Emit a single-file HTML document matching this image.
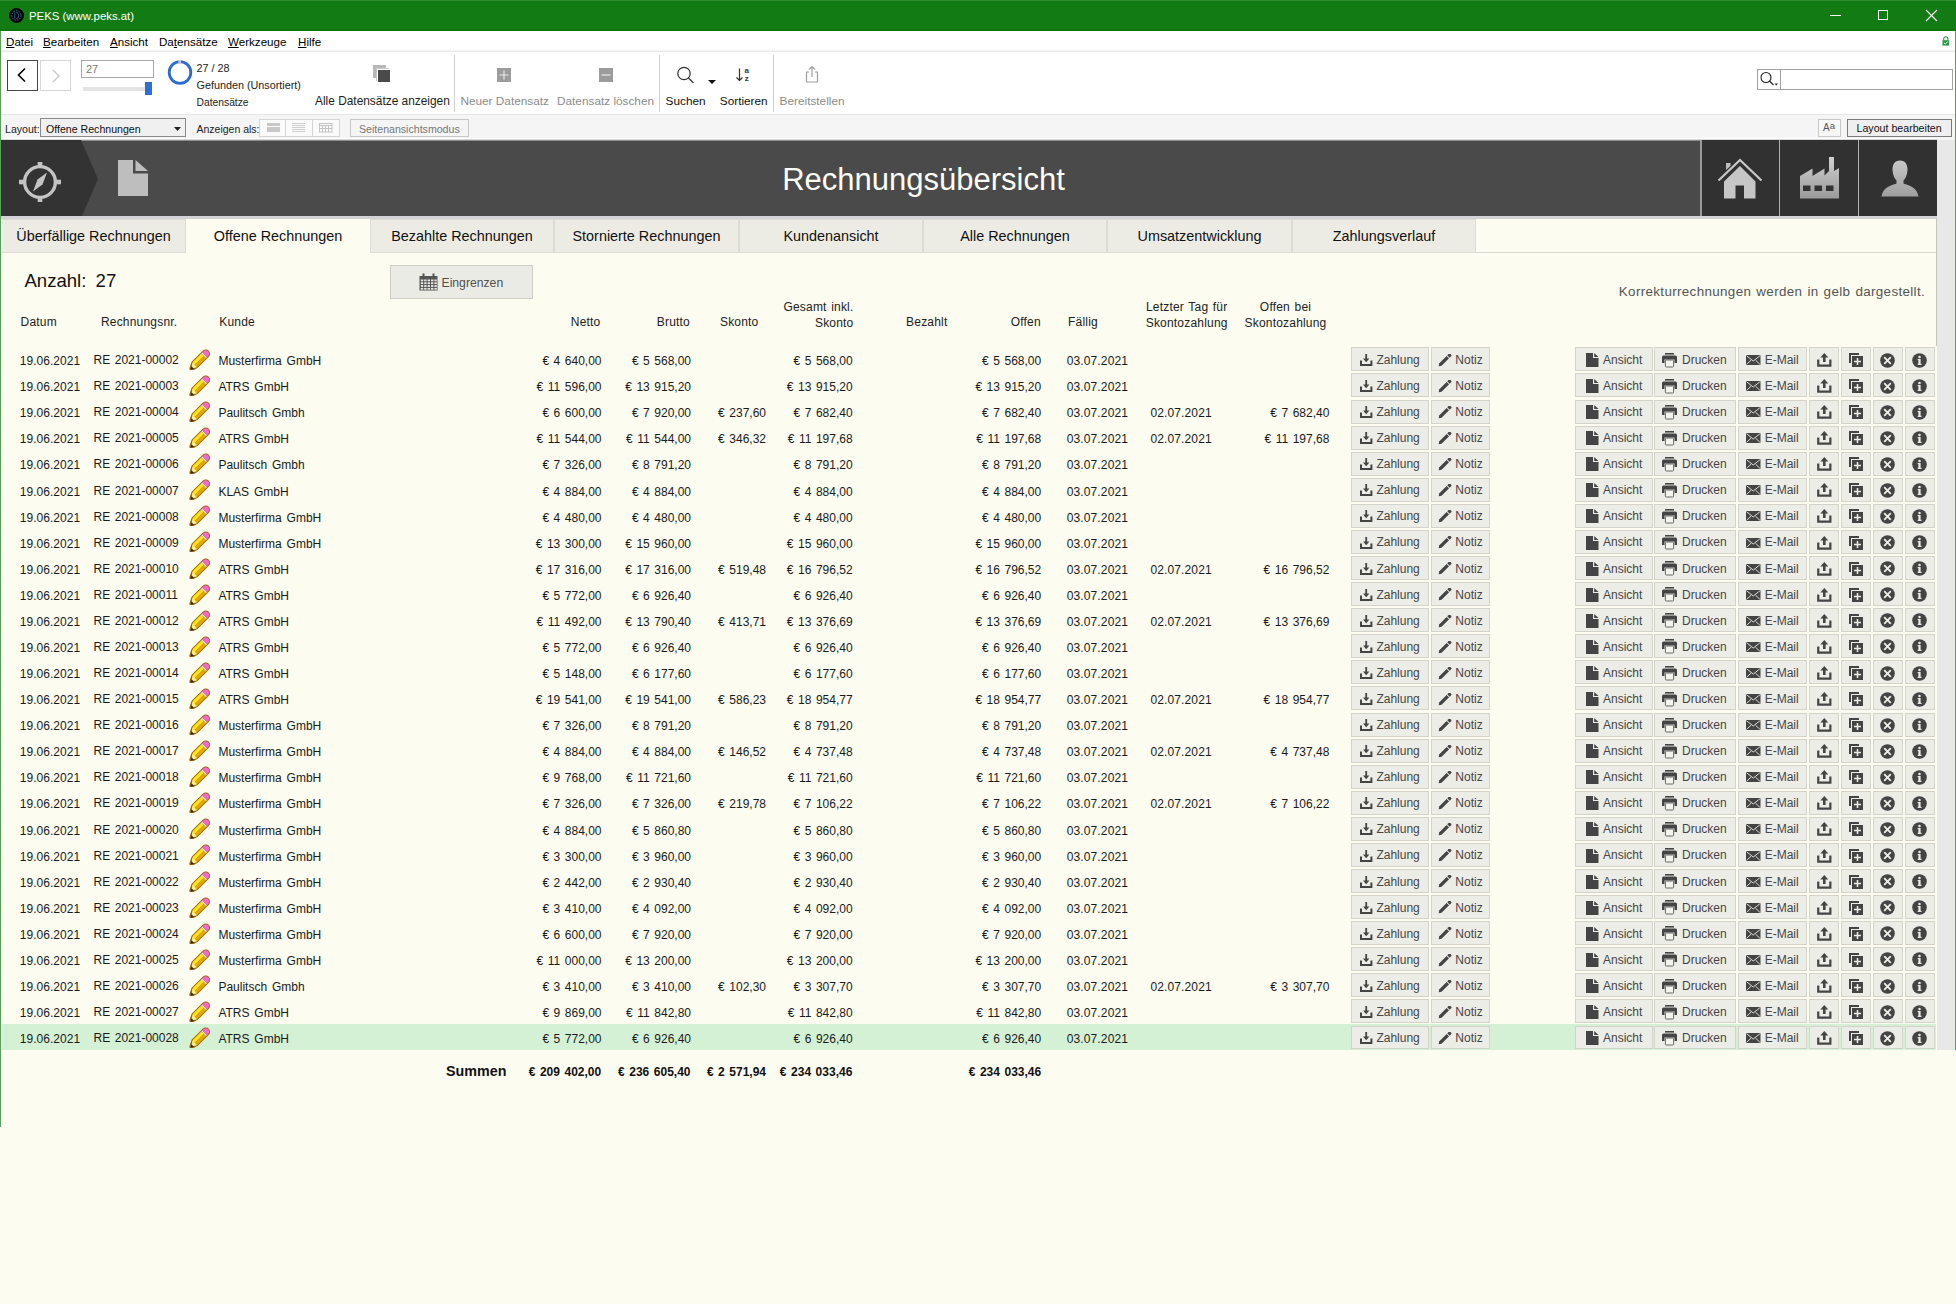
<!DOCTYPE html>
<html><head><meta charset="utf-8"><style>
html,body{margin:0;padding:0;}
body{width:1956px;height:1304px;overflow:hidden;position:relative;background:#FCFCF1;font-family:"Liberation Sans", sans-serif;}
.a{position:absolute;}
.t{position:absolute;white-space:nowrap;line-height:1;}
.b{position:absolute;height:24px;box-sizing:border-box;background:#EDEDE7;border:1px solid #D3D3CA;}
.b2{height:23px;}
svg.a{overflow:visible;}
u{text-decoration:underline;text-underline-offset:1px;}
</style></head><body>
<svg width="0" height="0" style="position:absolute"><defs>
<symbol id="pencil" viewBox="0 0 22 21"><g transform="translate(11 10.5) rotate(-45)">
<path d="M-14.6 0.6Q-14.6 -1 -13 -1.6L-7.5 -4.3H8.2A4.3 4.3 0 0 1 8.2 4.3H-7.5L-13 2.6Q-14.6 2 -14.6 0.6Z" fill="#9A6400"/>
<path d="M-12.6 0.4L-7 -3.3H5.2V0.2H-7Z" fill="#FFE21C"/>
<path d="M-12.6 0.4L-7 3.4H5.2V0.2H-7Z" fill="#E2AA00"/>
<path d="M-12.6 0.4L-7.5 -3V3.3Z" fill="#F4EC90"/>
<path d="M-13.6 0.5L-10.8 -1.4V2.2Z" fill="#1E2230"/>
<path d="M5.2 -3.3H6.6V3.4H5.2Z" fill="#E8E8E0"/>
<path d="M6.6 -3.3H8.2A3.3 3.3 0 0 1 8.2 3.4H6.6Z" fill="#F06AC8"/>
</g></symbol>
<symbol id="i_dl" viewBox="0 0 16 16"><path d="M5.3 0H7.1V4.6H9.4L6.2 8.2L3 4.6H5.3Z" fill="#444"/><path d="M1 6.5V11H11.4V6.5" fill="none" stroke="#444" stroke-width="2"/></symbol>
<symbol id="i_pen" viewBox="0 0 16 16"><g transform="translate(6.8 6.2) rotate(-45)"><path d="M-8.6 0L-6.3 -1.7H4.3V1.7H-6.3Z" fill="#444"/><path d="M5.2 -1.7H7.3A1 1 0 0 1 8.3 -0.7V0.7A1 1 0 0 1 7.3 1.7H5.2Z" fill="#444"/></g></symbol>
<symbol id="i_doc" viewBox="0 0 16 16"><path d="M0 0H7V5H12.5V14H0Z" fill="#444"/><path d="M8.2 0L12.5 3.9H8.2Z" fill="#444"/></symbol>
<symbol id="i_prn" viewBox="0 0 16 16"><rect x="3" y="0" width="9" height="1.6" fill="#444"/><path d="M1.5 2.5H13.5A1.5 1.5 0 0 1 15 4V10H12.5V6.5H2.5V10H0V4A1.5 1.5 0 0 1 1.5 2.5Z" fill="#444"/><rect x="3.4" y="7" width="8.2" height="7" rx="0.8" fill="#F4F4EE" stroke="#666" stroke-width="1"/></symbol>
<symbol id="i_env" viewBox="0 0 16 16"><rect x="0" y="0" width="14.5" height="10" rx="0.8" fill="#444"/><path d="M0.6 0.8L7.25 6L13.9 0.8M0.6 9.3L5 5.2M13.9 9.3L9.5 5.2" fill="none" stroke="#EDEDE7" stroke-width="0.9"/></symbol>
<symbol id="i_up" viewBox="0 0 16 16"><path d="M7.3 0L11.3 4.5H8.6V9H6V4.5H3.3Z" fill="#444"/><path d="M1.25 6.5V12.6H13.35V6.5" fill="none" stroke="#444" stroke-width="2.2"/></symbol>
<symbol id="i_dup" viewBox="0 0 16 16"><path d="M0 0H10V2H2V10H0Z" fill="#444"/><rect x="3" y="3" width="11" height="11" fill="#444"/><path d="M8.5 5V12M5 8.5H12" stroke="#EDEDE7" stroke-width="1.5"/></symbol>
<symbol id="i_x" viewBox="0 0 16 16"><circle cx="7.5" cy="7.5" r="7.3" fill="#444"/><path d="M4.2 4.2L10.8 10.8M10.8 4.2L4.2 10.8" stroke="#EDEDE7" stroke-width="1.9"/></symbol>
<symbol id="i_info" viewBox="0 0 16 16"><circle cx="7.5" cy="7.5" r="7.3" fill="#444"/><rect x="6.4" y="6" width="2.2" height="5.8" fill="#EDEDE7"/><rect x="5.6" y="6" width="2" height="1.1" fill="#EDEDE7"/><rect x="5.6" y="10.8" width="4" height="1.1" fill="#EDEDE7"/><circle cx="7.5" cy="3.9" r="1.25" fill="#EDEDE7"/></symbol>
</defs></svg>
<div class="a" style="left:0px;top:0px;width:1956px;height:31px;background:#137B13"></div>
<div class="a" style="left:0px;top:29px;width:1956px;height:2px;background:#0B770B"></div>
<div class="a" style="left:0px;top:0px;width:1956px;height:1px;background:#2E8B2E"></div>
<svg class="a" style="left:8px;top:6.6px" width="17" height="17" viewBox="0 0 17 17"><circle cx="8.5" cy="8.5" r="7.5" fill="#06060C"/><circle cx="8.5" cy="8.5" r="4.6" fill="none" stroke="#3A9A7A" stroke-width="1" stroke-dasharray="1.2 1.4"/><path d="M6.8 5.5V11.5M8.2 5.2A3.4 3.4 0 0 1 8.2 11.8" fill="none" stroke="#3A5A8A" stroke-width="0.9"/></svg>
<div class="t" style="left:29px;top:11.03px;font-size:11.4px;color:#FFFFFF;font-weight:400;">PEKS (www.peks.at)</div>
<div class="a" style="left:1830px;top:15px;width:11px;height:1px;background:#fff"></div>
<div class="a" style="left:1878px;top:10px;width:10px;height:10px;border:1px solid #fff;box-sizing:border-box;"></div>
<svg class="a" style="left:1925px;top:9px" width="13" height="13" viewBox="0 0 13 13"><path d="M1 1L12 12M12 1L1 12" stroke="#fff" stroke-width="1.1"/></svg>
<div class="a" style="left:0px;top:31px;width:1px;height:1096px;background:#5AA05A"></div>
<div class="a" style="left:1955px;top:31px;width:1px;height:1019px;background:#5AA05A"></div>
<div class="a" style="left:1px;top:31px;width:1954px;height:20px;background:#FFFFFF"></div>
<div class="a" style="left:1px;top:50px;width:1954px;height:2px;background:#F3F3F3"></div>
<div class="a" style="left:1px;top:50.5px;width:1954px;height:1px;background:#EBEBEB"></div>
<div class="t" style="left:6px;top:36.37px;font-size:11.6px;color:#000;font-weight:400;"><u>D</u>atei</div>
<div class="t" style="left:43px;top:36.37px;font-size:11.6px;color:#000;font-weight:400;"><u>B</u>earbeiten</div>
<div class="t" style="left:110px;top:36.37px;font-size:11.6px;color:#000;font-weight:400;"><u>A</u>nsicht</div>
<div class="t" style="left:159px;top:36.37px;font-size:11.6px;color:#000;font-weight:400;">Da<u>t</u>ensätze</div>
<div class="t" style="left:228px;top:36.37px;font-size:11.6px;color:#000;font-weight:400;"><u>W</u>erkzeuge</div>
<div class="t" style="left:298px;top:36.37px;font-size:11.6px;color:#000;font-weight:400;"><u>H</u>ilfe</div>
<svg class="a" style="left:1941.5px;top:36px" width="7.6" height="10" viewBox="0 0 9 12"><path d="M2 5V3.3a2.5 2.5 0 0 1 5 0V5" fill="none" stroke="#2A9A4A" stroke-width="1.3"/><rect x="0.5" y="5" width="8" height="6.5" fill="#2A9A4A"/><path d="M2.3 8.2l1.6 1.5 2.8-3" fill="none" stroke="#fff" stroke-width="1"/></svg>
<div class="a" style="left:1px;top:52px;width:1954px;height:62px;background:#FFFFFF"></div>
<div class="a" style="left:7px;top:60px;width:31px;height:31px;border:1px solid #444;box-sizing:border-box;background:#fff"></div>
<svg class="a" style="left:16px;top:67px" width="12" height="16" viewBox="0 0 12 16"><path d="M9 1.5L2.5 8L9 14.5" fill="none" stroke="#000" stroke-width="1.6"/></svg>
<div class="a" style="left:40px;top:60px;width:31px;height:31px;border:1px solid #D6D6D6;box-sizing:border-box;background:#fff"></div>
<svg class="a" style="left:51px;top:69px" width="10" height="14" viewBox="0 0 10 14"><path d="M2 1L8 7L2 13" fill="none" stroke="#C8C8C8" stroke-width="1.3"/></svg>
<div class="a" style="left:81px;top:60px;width:73px;height:18px;border:1px solid #A8A8A8;box-sizing:border-box;background:#fff"></div>
<div class="t" style="left:86px;top:64.36px;font-size:11px;color:#777;font-weight:400;">27</div>
<div class="a" style="left:83px;top:87px;width:62px;height:4px;background:#E4E4E4"></div>
<div class="a" style="left:145px;top:82px;width:7px;height:13px;background:#2F6FD0"></div>
<svg class="a" style="left:166px;top:59px" width="28" height="28" viewBox="0 0 28 28"><circle cx="14" cy="13.5" r="10.8" fill="none" stroke="#2D6BD2" stroke-width="2.8"/><rect x="12.4" y="1" width="2.6" height="4" fill="#C8C8C8"/></svg>
<div class="t" style="left:196.5px;top:63.33px;font-size:10.8px;color:#222;font-weight:400;">27 / 28</div>
<div class="t" style="left:196.5px;top:80.03px;font-size:10.8px;color:#222;font-weight:400;">Gefunden (Unsortiert)</div>
<div class="t" style="left:196.5px;top:98.45px;font-size:10.3px;color:#222;font-weight:400;">Datensätze</div>
<div class="a" style="left:373px;top:65px;width:12.5px;height:12.5px;background:#B8B8B8"></div>
<div class="a" style="left:375.5px;top:67.5px;width:12.5px;height:12.5px;background:#fff"></div>
<div class="a" style="left:376px;top:68px;width:12.5px;height:12.5px;background:#C8C8C8"></div>
<div class="a" style="left:378px;top:70px;width:12px;height:12px;background:#4A4A4A;box-shadow:-1px -1px 0 #fff"></div>
<div class="t" style="left:315px;top:95.82px;font-size:11.9px;color:#222;font-weight:400;">Alle Datensätze anzeigen</div>
<div class="a" style="left:454px;top:55px;width:1px;height:57px;background:#D0D0D0"></div>
<div class="a" style="left:659px;top:55px;width:1px;height:57px;background:#D0D0D0"></div>
<div class="a" style="left:773px;top:55px;width:1px;height:57px;background:#D0D0D0"></div>
<svg class="a" style="left:497px;top:68px" width="14" height="14" viewBox="0 0 14 14"><rect width="14" height="14" fill="#9C9C9C"/><path d="M7 2.5V11.5M2.5 7H11.5" stroke="#E8E8E8" stroke-width="1.2"/></svg>
<div class="t" style="left:460.4px;top:96.20px;font-size:11.8px;color:#8C8C8C;font-weight:400;">Neuer Datensatz</div>
<svg class="a" style="left:599px;top:68px" width="14" height="14" viewBox="0 0 14 14"><rect width="14" height="14" fill="#9C9C9C"/><path d="M2.5 7H11.5" stroke="#E8E8E8" stroke-width="1.2"/></svg>
<div class="t" style="left:557px;top:96.20px;font-size:11.8px;color:#8C8C8C;font-weight:400;">Datensatz löschen</div>
<svg class="a" style="left:676px;top:66px" width="42" height="20" viewBox="0 0 42 20"><circle cx="8" cy="7.5" r="6.2" fill="none" stroke="#333" stroke-width="1.2"/><path d="M12.5 12L17.5 17" stroke="#333" stroke-width="1.3"/><path d="M32 14H40L36 18Z" fill="#111"/></svg>
<div class="t" style="left:665.6px;top:96.20px;font-size:11.8px;color:#111;font-weight:400;">Suchen</div>
<svg class="a" style="left:735px;top:66px" width="16" height="17" viewBox="0 0 16 17"><path d="M4.5 2.5V14.5M1.5 11.5L4.5 14.5L7.5 11.5" fill="none" stroke="#333" stroke-width="1.2"/><text x="9.6" y="7.4" font-family="Liberation Sans" font-size="8" font-weight="700" fill="#333">a</text><text x="9.8" y="14.8" font-family="Liberation Sans" font-size="8" font-weight="700" fill="#333">z</text></svg>
<div class="t" style="left:719.8px;top:96.20px;font-size:11.8px;color:#111;font-weight:400;">Sortieren</div>
<svg class="a" style="left:804px;top:64px" width="16" height="20" viewBox="0 0 16 20"><path d="M5 8H2.5V18H13.5V8H11" fill="none" stroke="#A0A0A0" stroke-width="1.2"/><path d="M8 13V2.5M5 5.5L8 2.5L11 5.5" fill="none" stroke="#A0A0A0" stroke-width="1.2"/></svg>
<div class="t" style="left:779.6px;top:96.20px;font-size:11.8px;color:#8C8C8C;font-weight:400;">Bereitstellen</div>
<div class="a" style="left:1757px;top:69px;width:196px;height:21px;border:1px solid #A0A0A0;box-sizing:border-box;background:#fff"></div>
<div class="a" style="left:1780px;top:70px;width:1px;height:19px;background:#A0A0A0"></div>
<svg class="a" style="left:1759px;top:71px" width="20" height="17" viewBox="0 0 20 17"><circle cx="7" cy="6.5" r="5" fill="none" stroke="#222" stroke-width="1.1"/><path d="M10.5 10L14.5 14" stroke="#222" stroke-width="1.1"/><path d="M15.5 12.5H19L17.25 14.5Z" fill="#222"/></svg>
<div class="a" style="left:1px;top:114px;width:1954px;height:26px;background:#F5F5F5"></div>
<div class="a" style="left:1px;top:114px;width:1954px;height:1px;background:#E6E6E6"></div>
<div class="t" style="left:5px;top:123.70px;font-size:10.6px;color:#222;font-weight:400;">Layout:</div>
<div class="a" style="left:40px;top:118px;width:146px;height:19px;border:1px solid #8A8A8A;box-sizing:border-box;background:#F0F0F0"></div>
<div class="t" style="left:46px;top:123.50px;font-size:10.6px;color:#111;font-weight:400;">Offene Rechnungen</div>
<svg class="a" style="left:174px;top:127px" width="7" height="4" viewBox="0 0 7 4"><path d="M0 0H7L3.5 4Z" fill="#222"/></svg>
<div class="t" style="left:196.5px;top:123.78px;font-size:10.5px;color:#222;font-weight:400;">Anzeigen als:</div>
<div class="a" style="left:259px;top:119px;width:81px;height:18px;border:1px solid #D4D4D4;box-sizing:border-box;background:#FAFAFA"></div>
<div class="a" style="left:285px;top:119px;width:1px;height:18px;background:#D4D4D4"></div>
<div class="a" style="left:312px;top:119px;width:1px;height:18px;background:#D4D4D4"></div>
<div class="a" style="left:266.5px;top:123px;width:13.5px;height:2.5px;background:#C8C8C8"></div>
<div class="a" style="left:266.5px;top:127px;width:13.5px;height:4.5px;background:#C8C8C8"></div>
<div class="a" style="left:292px;top:123px;width:13px;height:1px;background:#CFCFCF"></div>
<div class="a" style="left:292px;top:125px;width:13px;height:1px;background:#CFCFCF"></div>
<div class="a" style="left:292px;top:127px;width:13px;height:1px;background:#CFCFCF"></div>
<div class="a" style="left:292px;top:129px;width:13px;height:1px;background:#CFCFCF"></div>
<div class="a" style="left:292px;top:131px;width:13px;height:1px;background:#CFCFCF"></div>
<svg class="a" style="left:319px;top:123px" width="14" height="10" viewBox="0 0 14 10"><rect x="0.5" y="0.5" width="12.5" height="8.5" fill="none" stroke="#C4C4C4"/><path d="M0.5 2.5H13M0.5 5.5H13M3.5 2.5V9M6.5 2.5V9M9.5 2.5V9" stroke="#C4C4C4"/></svg>
<div class="a" style="left:350px;top:119px;width:119px;height:18px;border:1px solid #C8C8C8;box-sizing:border-box;background:#F5F5F5"></div>
<div class="t" style="left:359px;top:123.50px;font-size:10.6px;color:#777;font-weight:400;">Seitenansichtsmodus</div>
<div class="a" style="left:1818px;top:119px;width:23px;height:18px;border:1px solid #C8C8C8;box-sizing:border-box;background:#F8F8F8"></div>
<div class="t" style="left:1823px;top:122.69px;font-size:10px;color:#555;font-weight:400;">A<span style="font-size:9.5px;position:relative;top:-2px">a</span></div>
<div class="a" style="left:1847px;top:119px;width:105px;height:18px;border:1px solid #7A7A7A;box-sizing:border-box;background:#EFEFEF"></div>
<div class="t" style="left:1856.5px;top:123.46px;font-size:10.65px;color:#111;font-weight:400;">Layout bearbeiten</div>
<div class="a" style="left:1px;top:138px;width:1936px;height:1px;background:#FFFFFF"></div>
<div class="a" style="left:1px;top:139px;width:1936px;height:1px;background:#D8D8D8"></div>
<div class="a" style="left:1px;top:140px;width:1936px;height:76px;background:#4A4A4A"></div>
<div class="a" style="left:1px;top:140px;width:1936px;height:1px;background:#8C8C8C"></div>
<svg class="a" style="left:1px;top:140px" width="100" height="76" viewBox="0 0 100 76"><path d="M0 0H80L97 39L81 76H0Z" fill="#333333"/></svg>
<svg class="a" style="left:19px;top:161px" width="42" height="42" viewBox="0 0 42 42"><circle cx="21" cy="21" r="15.4" fill="none" stroke="#C4C4C4" stroke-width="3.4"/><rect x="18.7" y="1" width="4.6" height="5" fill="#C4C4C4"/><rect x="18.7" y="36" width="4.6" height="5" fill="#C4C4C4"/><rect x="0" y="18.7" width="5" height="4.6" fill="#C4C4C4"/><rect x="37" y="18.7" width="5" height="4.6" fill="#C4C4C4"/><path d="M28 11.5L23.5 23.5L14 30.5L18.5 18.5Z" fill="#C4C4C4"/></svg>
<svg class="a" style="left:118px;top:159px" width="32" height="38" viewBox="0 0 32 38"><path d="M0 1H15V14.5H30V37H0Z" fill="#BEBEBE"/><path d="M17.5 1L30 12H17.5Z" fill="#BEBEBE"/></svg>
<div class="t" style="left:623.5px;width:600px;text-align:center;top:163.85px;font-size:31px;color:#FFFFF8;font-weight:400;">Rechnungsübersicht</div>
<div class="a" style="left:1700px;top:140px;width:2px;height:76px;background:#9A9A9A"></div>
<div class="a" style="left:1702px;top:140px;width:77px;height:76px;background:#313131"></div>
<div class="a" style="left:1780px;top:140px;width:78px;height:76px;background:#313131"></div>
<div class="a" style="left:1859px;top:140px;width:78px;height:76px;background:#313131"></div>
<div class="a" style="left:1779px;top:140px;width:1px;height:76px;background:#B0B0B0"></div>
<div class="a" style="left:1858px;top:140px;width:1px;height:76px;background:#B0B0B0"></div>
<svg class="a" style="left:1717px;top:157px" width="46" height="43" viewBox="0 0 46 43"><path d="M1.5 23.5L23 3L44.5 23.5" fill="none" stroke="#C8C8C8" stroke-width="2.2"/><path d="M9 13V6H13.5V9Z" fill="#BEBEBE"/><path d="M7 24.5L23 9L38.5 24.5V41.5H27V28.5H18.5V41.5H7Z" fill="#C6C6C6"/></svg>
<svg class="a" style="left:1799px;top:156px" width="42" height="44" viewBox="0 0 42 44"><defs><linearGradient id="gf" x1="0" y1="0" x2="0" y2="1"><stop offset="0" stop-color="#D0D0D0"/><stop offset="1" stop-color="#9A9A9A"/></linearGradient></defs><path d="M1 20L13.5 12.5V20L25.5 12.5V19.5L30 15V1H35V15L40 12V42.5H1Z" fill="url(#gf)"/><rect x="4" y="29.5" width="7.5" height="5.5" fill="#333"/><rect x="15.5" y="29.5" width="7.5" height="5.5" fill="#333"/><rect x="27" y="29.5" width="7.5" height="5.5" fill="#333"/></svg>
<svg class="a" style="left:1880px;top:159px" width="40" height="40" viewBox="0 0 40 40"><defs><linearGradient id="gp" x1="0" y1="0" x2="0" y2="1"><stop offset="0" stop-color="#C8C8C8"/><stop offset="1" stop-color="#9E9E9E"/></linearGradient></defs><path d="M20 1.5C14.5 1.5 12.5 5.5 12.5 10.5C12.5 15.5 14.5 19.5 16.5 21.5V24.5C11 26.5 3 28 1.5 37.5H38.5C37 28 29 26.5 23.5 24.5V21.5C25.5 19.5 27.5 15.5 27.5 10.5C27.5 5.5 25.5 1.5 20 1.5Z" fill="url(#gp)"/></svg>
<div class="a" style="left:1px;top:216px;width:1936px;height:3px;background:#D3D3D8"></div>
<div class="a" style="left:1px;top:219px;width:1935px;height:831px;background:#FCFCF1"></div>
<div class="a" style="left:1936px;top:219px;width:1px;height:127px;background:#C4C6BC"></div>
<div class="a" style="left:1937px;top:140px;width:18px;height:910px;background:#E8E8E8"></div>
<div class="a" style="left:1px;top:252px;width:1935px;height:1px;background:#D8D8D0"></div>
<div class="a" style="left:1px;top:219px;width:185px;height:34px;background:#ECECE5;border:1px solid #DCDCD4;box-sizing:border-box"></div>
<div class="t" style="left:-206.5px;width:600px;text-align:center;top:229.34px;font-size:14.4px;color:#111;font-weight:400;">Überfällige Rechnungen</div>
<div class="a" style="left:186px;top:219px;width:184px;height:34px;background:#FCFCF1"></div>
<div class="t" style="left:-22.0px;width:600px;text-align:center;top:229.34px;font-size:14.4px;color:#111;font-weight:400;">Offene Rechnungen</div>
<div class="a" style="left:370px;top:219px;width:184px;height:34px;background:#ECECE5;border:1px solid #DCDCD4;box-sizing:border-box"></div>
<div class="t" style="left:162.0px;width:600px;text-align:center;top:229.34px;font-size:14.4px;color:#111;font-weight:400;">Bezahlte Rechnungen</div>
<div class="a" style="left:554px;top:219px;width:185px;height:34px;background:#ECECE5;border:1px solid #DCDCD4;box-sizing:border-box"></div>
<div class="t" style="left:346.5px;width:600px;text-align:center;top:229.34px;font-size:14.4px;color:#111;font-weight:400;">Stornierte Rechnungen</div>
<div class="a" style="left:739px;top:219px;width:184px;height:34px;background:#ECECE5;border:1px solid #DCDCD4;box-sizing:border-box"></div>
<div class="t" style="left:531.0px;width:600px;text-align:center;top:229.34px;font-size:14.4px;color:#111;font-weight:400;">Kundenansicht</div>
<div class="a" style="left:923px;top:219px;width:184px;height:34px;background:#ECECE5;border:1px solid #DCDCD4;box-sizing:border-box"></div>
<div class="t" style="left:715.0px;width:600px;text-align:center;top:229.34px;font-size:14.4px;color:#111;font-weight:400;">Alle Rechnungen</div>
<div class="a" style="left:1107px;top:219px;width:185px;height:34px;background:#ECECE5;border:1px solid #DCDCD4;box-sizing:border-box"></div>
<div class="t" style="left:899.5px;width:600px;text-align:center;top:229.34px;font-size:14.4px;color:#111;font-weight:400;">Umsatzentwicklung</div>
<div class="a" style="left:1292px;top:219px;width:184px;height:34px;background:#ECECE5;border:1px solid #DCDCD4;box-sizing:border-box"></div>
<div class="t" style="left:1084.0px;width:600px;text-align:center;top:229.34px;font-size:14.4px;color:#111;font-weight:400;">Zahlungsverlauf</div>
<div class="t" style="left:24.4px;top:272.15px;font-size:18.6px;color:#111;font-weight:400;">Anzahl:</div>
<div class="t" style="left:95.6px;top:272.15px;font-size:18.6px;color:#111;font-weight:400;">27</div>
<div class="a" style="left:390px;top:265px;width:143px;height:34px;background:#EBEBE5;border:1px solid #CFCFC8;box-sizing:border-box"></div>
<svg class="a" style="left:419px;top:273px" width="19" height="18" viewBox="0 0 19 18"><rect x="0.5" y="3" width="18" height="14.5" fill="#555"/><g fill="#EBEBE5"><rect x="1.8" y="6.5" width="2.4" height="1.8"/><rect x="1.8" y="9.3" width="2.4" height="1.8"/><rect x="1.8" y="12.1" width="2.4" height="1.8"/><rect x="1.8" y="14.9" width="2.4" height="1.8"/><rect x="5.2" y="6.5" width="2.4" height="1.8"/><rect x="5.2" y="9.3" width="2.4" height="1.8"/><rect x="5.2" y="12.1" width="2.4" height="1.8"/><rect x="5.2" y="14.9" width="2.4" height="1.8"/><rect x="8.6" y="6.5" width="2.4" height="1.8"/><rect x="8.6" y="9.3" width="2.4" height="1.8"/><rect x="8.6" y="12.1" width="2.4" height="1.8"/><rect x="8.6" y="14.9" width="2.4" height="1.8"/><rect x="12.0" y="6.5" width="2.4" height="1.8"/><rect x="12.0" y="9.3" width="2.4" height="1.8"/><rect x="12.0" y="12.1" width="2.4" height="1.8"/><rect x="12.0" y="14.9" width="2.4" height="1.8"/><rect x="15.4" y="6.5" width="2.4" height="1.8"/><rect x="15.4" y="9.3" width="2.4" height="1.8"/><rect x="15.4" y="12.1" width="2.4" height="1.8"/><rect x="15.4" y="14.9" width="2.4" height="1.8"/></g><rect x="3.5" y="0.5" width="2" height="4" fill="#555"/><rect x="13.5" y="0.5" width="2" height="4" fill="#555"/></svg>
<div class="t" style="left:441.5px;top:276.57px;font-size:12.2px;color:#505050;font-weight:400;">Eingrenzen</div>
<div class="t" style="left:1618.8px;top:284.87px;font-size:13.4px;color:#555;font-weight:400;letter-spacing:0.35px;word-spacing:1px">Korrekturrechnungen werden in gelb dargestellt.</div>
<div class="t" style="left:20.6px;top:316.03px;font-size:12px;color:#222;font-weight:400;word-spacing:1px;letter-spacing:0.2px">Datum</div>
<div class="t" style="left:100.9px;top:316.03px;font-size:12px;color:#222;font-weight:400;word-spacing:1px;letter-spacing:0.2px">Rechnungsnr.</div>
<div class="t" style="left:219.3px;top:316.03px;font-size:12px;color:#222;font-weight:400;word-spacing:1px;letter-spacing:0.2px">Kunde</div>
<div class="t" style="right:1355.5px;top:316.03px;font-size:12px;color:#222;font-weight:400;word-spacing:1px;letter-spacing:0.2px">Netto</div>
<div class="t" style="right:1266px;top:316.03px;font-size:12px;color:#222;font-weight:400;word-spacing:1px;letter-spacing:0.2px">Brutto</div>
<div class="t" style="right:1197.5px;top:316.03px;font-size:12px;color:#222;font-weight:400;word-spacing:1px;letter-spacing:0.2px">Skonto</div>
<div class="t" style="right:1102.5px;top:301.23px;font-size:12px;color:#222;font-weight:400;word-spacing:1px;letter-spacing:0.2px">Gesamt inkl.</div>
<div class="t" style="right:1102.5px;top:316.53px;font-size:12px;color:#222;font-weight:400;word-spacing:1px;letter-spacing:0.2px">Skonto</div>
<div class="t" style="right:1008.5px;top:316.03px;font-size:12px;color:#222;font-weight:400;word-spacing:1px;letter-spacing:0.2px">Bezahlt</div>
<div class="t" style="right:915.2px;top:316.03px;font-size:12px;color:#222;font-weight:400;word-spacing:1px;letter-spacing:0.2px">Offen</div>
<div class="t" style="left:1068px;top:316.03px;font-size:12px;color:#222;font-weight:400;word-spacing:1px;letter-spacing:0.2px">Fällig</div>
<div class="t" style="left:886.7px;width:600px;text-align:center;top:301.23px;font-size:12px;color:#222;font-weight:400;word-spacing:1px;letter-spacing:0.2px">Letzter Tag für</div>
<div class="t" style="left:886.7px;width:600px;text-align:center;top:316.73px;font-size:12px;color:#222;font-weight:400;word-spacing:1px;letter-spacing:0.2px">Skontozahlung</div>
<div class="t" style="left:985.5px;width:600px;text-align:center;top:301.23px;font-size:12px;color:#222;font-weight:400;word-spacing:1px;letter-spacing:0.2px">Offen bei</div>
<div class="t" style="left:985.5px;width:600px;text-align:center;top:316.73px;font-size:12px;color:#222;font-weight:400;word-spacing:1px;letter-spacing:0.2px">Skontozahlung</div>
<div class="t" style="left:19.7px;top:355.13px;font-size:12px;color:#1A1A1A;font-weight:400;letter-spacing:0.05px">19.06.2021</div>
<div class="t" style="left:93.5px;top:354.13px;font-size:12px;color:#1A1A1A;font-weight:400;word-spacing:1.2px">RE 2021-00002</div>
<svg class="a" style="left:189px;top:348.90px" width="22" height="21"><use href="#pencil"/></svg>
<div class="t" style="left:218.4px;top:355.13px;font-size:12px;color:#1A1A1A;font-weight:400;word-spacing:1.5px">Musterfirma GmbH</div>
<div class="t" style="right:1354.5px;top:355.13px;font-size:12px;color:#1A1A1A;font-weight:400;word-spacing:1.2px">&euro; 4 640,00</div>
<div class="t" style="right:1265px;top:355.13px;font-size:12px;color:#1A1A1A;font-weight:400;word-spacing:1.2px">&euro; 5 568,00</div>
<div class="t" style="right:1103.4px;top:355.13px;font-size:12px;color:#1A1A1A;font-weight:400;word-spacing:1.2px">&euro; 5 568,00</div>
<div class="t" style="right:914.8px;top:355.13px;font-size:12px;color:#1A1A1A;font-weight:400;word-spacing:1.2px">&euro; 5 568,00</div>
<div class="t" style="left:1066.7px;top:355.13px;font-size:12px;color:#1A1A1A;font-weight:400;letter-spacing:0.13px">03.07.2021</div>
<div class="b" style="left:1351px;top:347.40px;width:78px"></div>
<svg class="a" style="left:1359.6px;top:354.00px" width="16" height="16"><use href="#i_dl"/></svg>
<div class="t" style="left:1376.4px;top:353.93px;font-size:12px;color:#454545;font-weight:400;">Zahlung</div>
<div class="b" style="left:1431px;top:347.40px;width:59px"></div>
<svg class="a" style="left:1437.7px;top:353.70px" width="16" height="16"><use href="#i_pen"/></svg>
<div class="t" style="left:1455.3px;top:353.93px;font-size:12px;color:#454545;font-weight:400;">Notiz</div>
<div class="b" style="left:1575px;top:347.40px;width:78px"></div>
<svg class="a" style="left:1585.7px;top:353.00px" width="16" height="16"><use href="#i_doc"/></svg>
<div class="t" style="left:1603px;top:353.93px;font-size:12px;color:#454545;font-weight:400;">Ansicht</div>
<div class="b" style="left:1654px;top:347.40px;width:82px"></div>
<svg class="a" style="left:1661.5px;top:352.60px" width="16" height="16"><use href="#i_prn"/></svg>
<div class="t" style="left:1682px;top:353.93px;font-size:12px;color:#454545;font-weight:400;">Drucken</div>
<div class="b" style="left:1738px;top:347.40px;width:69px"></div>
<svg class="a" style="left:1746px;top:355.00px" width="16" height="16"><use href="#i_env"/></svg>
<div class="t" style="left:1764.7px;top:353.93px;font-size:12px;color:#454545;font-weight:400;">E-Mail</div>
<div class="b" style="left:1809px;top:347.40px;width:30px"></div>
<svg class="a" style="left:1817px;top:353.00px" width="16" height="16"><use href="#i_up"/></svg>
<div class="b" style="left:1841px;top:347.40px;width:30px"></div>
<svg class="a" style="left:1849px;top:353.00px" width="16" height="16"><use href="#i_dup"/></svg>
<div class="b" style="left:1873px;top:347.40px;width:30px"></div>
<svg class="a" style="left:1880.3px;top:352.60px" width="16" height="16"><use href="#i_x"/></svg>
<div class="b" style="left:1905px;top:347.40px;width:30px"></div>
<svg class="a" style="left:1912.3px;top:352.60px" width="16" height="16"><use href="#i_info"/></svg>
<div class="t" style="left:19.7px;top:381.21px;font-size:12px;color:#1A1A1A;font-weight:400;letter-spacing:0.05px">19.06.2021</div>
<div class="t" style="left:93.5px;top:380.21px;font-size:12px;color:#1A1A1A;font-weight:400;word-spacing:1.2px">RE 2021-00003</div>
<svg class="a" style="left:189px;top:374.98px" width="22" height="21"><use href="#pencil"/></svg>
<div class="t" style="left:218.4px;top:381.21px;font-size:12px;color:#1A1A1A;font-weight:400;word-spacing:1.5px">ATRS GmbH</div>
<div class="t" style="right:1354.5px;top:381.21px;font-size:12px;color:#1A1A1A;font-weight:400;word-spacing:1.2px">&euro; 11 596,00</div>
<div class="t" style="right:1265px;top:381.21px;font-size:12px;color:#1A1A1A;font-weight:400;word-spacing:1.2px">&euro; 13 915,20</div>
<div class="t" style="right:1103.4px;top:381.21px;font-size:12px;color:#1A1A1A;font-weight:400;word-spacing:1.2px">&euro; 13 915,20</div>
<div class="t" style="right:914.8px;top:381.21px;font-size:12px;color:#1A1A1A;font-weight:400;word-spacing:1.2px">&euro; 13 915,20</div>
<div class="t" style="left:1066.7px;top:381.21px;font-size:12px;color:#1A1A1A;font-weight:400;letter-spacing:0.13px">03.07.2021</div>
<div class="b" style="left:1351px;top:373.48px;width:78px"></div>
<svg class="a" style="left:1359.6px;top:380.08px" width="16" height="16"><use href="#i_dl"/></svg>
<div class="t" style="left:1376.4px;top:380.01px;font-size:12px;color:#454545;font-weight:400;">Zahlung</div>
<div class="b" style="left:1431px;top:373.48px;width:59px"></div>
<svg class="a" style="left:1437.7px;top:379.78px" width="16" height="16"><use href="#i_pen"/></svg>
<div class="t" style="left:1455.3px;top:380.01px;font-size:12px;color:#454545;font-weight:400;">Notiz</div>
<div class="b" style="left:1575px;top:373.48px;width:78px"></div>
<svg class="a" style="left:1585.7px;top:379.08px" width="16" height="16"><use href="#i_doc"/></svg>
<div class="t" style="left:1603px;top:380.01px;font-size:12px;color:#454545;font-weight:400;">Ansicht</div>
<div class="b" style="left:1654px;top:373.48px;width:82px"></div>
<svg class="a" style="left:1661.5px;top:378.68px" width="16" height="16"><use href="#i_prn"/></svg>
<div class="t" style="left:1682px;top:380.01px;font-size:12px;color:#454545;font-weight:400;">Drucken</div>
<div class="b" style="left:1738px;top:373.48px;width:69px"></div>
<svg class="a" style="left:1746px;top:381.08px" width="16" height="16"><use href="#i_env"/></svg>
<div class="t" style="left:1764.7px;top:380.01px;font-size:12px;color:#454545;font-weight:400;">E-Mail</div>
<div class="b" style="left:1809px;top:373.48px;width:30px"></div>
<svg class="a" style="left:1817px;top:379.08px" width="16" height="16"><use href="#i_up"/></svg>
<div class="b" style="left:1841px;top:373.48px;width:30px"></div>
<svg class="a" style="left:1849px;top:379.08px" width="16" height="16"><use href="#i_dup"/></svg>
<div class="b" style="left:1873px;top:373.48px;width:30px"></div>
<svg class="a" style="left:1880.3px;top:378.68px" width="16" height="16"><use href="#i_x"/></svg>
<div class="b" style="left:1905px;top:373.48px;width:30px"></div>
<svg class="a" style="left:1912.3px;top:378.68px" width="16" height="16"><use href="#i_info"/></svg>
<div class="t" style="left:19.7px;top:407.29px;font-size:12px;color:#1A1A1A;font-weight:400;letter-spacing:0.05px">19.06.2021</div>
<div class="t" style="left:93.5px;top:406.29px;font-size:12px;color:#1A1A1A;font-weight:400;word-spacing:1.2px">RE 2021-00004</div>
<svg class="a" style="left:189px;top:401.06px" width="22" height="21"><use href="#pencil"/></svg>
<div class="t" style="left:218.4px;top:407.29px;font-size:12px;color:#1A1A1A;font-weight:400;word-spacing:1.5px">Paulitsch Gmbh</div>
<div class="t" style="right:1354.5px;top:407.29px;font-size:12px;color:#1A1A1A;font-weight:400;word-spacing:1.2px">&euro; 6 600,00</div>
<div class="t" style="right:1265px;top:407.29px;font-size:12px;color:#1A1A1A;font-weight:400;word-spacing:1.2px">&euro; 7 920,00</div>
<div class="t" style="right:1190px;top:407.29px;font-size:12px;color:#1A1A1A;font-weight:400;word-spacing:1.2px">&euro; 237,60</div>
<div class="t" style="right:1103.4px;top:407.29px;font-size:12px;color:#1A1A1A;font-weight:400;word-spacing:1.2px">&euro; 7 682,40</div>
<div class="t" style="right:914.8px;top:407.29px;font-size:12px;color:#1A1A1A;font-weight:400;word-spacing:1.2px">&euro; 7 682,40</div>
<div class="t" style="left:1066.7px;top:407.29px;font-size:12px;color:#1A1A1A;font-weight:400;letter-spacing:0.13px">03.07.2021</div>
<div class="t" style="left:1150.4px;top:407.29px;font-size:12px;color:#1A1A1A;font-weight:400;letter-spacing:0.13px">02.07.2021</div>
<div class="t" style="right:626.5999999999999px;top:407.29px;font-size:12px;color:#1A1A1A;font-weight:400;word-spacing:1.2px">&euro; 7 682,40</div>
<div class="b" style="left:1351px;top:399.56px;width:78px"></div>
<svg class="a" style="left:1359.6px;top:406.16px" width="16" height="16"><use href="#i_dl"/></svg>
<div class="t" style="left:1376.4px;top:406.09px;font-size:12px;color:#454545;font-weight:400;">Zahlung</div>
<div class="b" style="left:1431px;top:399.56px;width:59px"></div>
<svg class="a" style="left:1437.7px;top:405.86px" width="16" height="16"><use href="#i_pen"/></svg>
<div class="t" style="left:1455.3px;top:406.09px;font-size:12px;color:#454545;font-weight:400;">Notiz</div>
<div class="b" style="left:1575px;top:399.56px;width:78px"></div>
<svg class="a" style="left:1585.7px;top:405.16px" width="16" height="16"><use href="#i_doc"/></svg>
<div class="t" style="left:1603px;top:406.09px;font-size:12px;color:#454545;font-weight:400;">Ansicht</div>
<div class="b" style="left:1654px;top:399.56px;width:82px"></div>
<svg class="a" style="left:1661.5px;top:404.76px" width="16" height="16"><use href="#i_prn"/></svg>
<div class="t" style="left:1682px;top:406.09px;font-size:12px;color:#454545;font-weight:400;">Drucken</div>
<div class="b" style="left:1738px;top:399.56px;width:69px"></div>
<svg class="a" style="left:1746px;top:407.16px" width="16" height="16"><use href="#i_env"/></svg>
<div class="t" style="left:1764.7px;top:406.09px;font-size:12px;color:#454545;font-weight:400;">E-Mail</div>
<div class="b" style="left:1809px;top:399.56px;width:30px"></div>
<svg class="a" style="left:1817px;top:405.16px" width="16" height="16"><use href="#i_up"/></svg>
<div class="b" style="left:1841px;top:399.56px;width:30px"></div>
<svg class="a" style="left:1849px;top:405.16px" width="16" height="16"><use href="#i_dup"/></svg>
<div class="b" style="left:1873px;top:399.56px;width:30px"></div>
<svg class="a" style="left:1880.3px;top:404.76px" width="16" height="16"><use href="#i_x"/></svg>
<div class="b" style="left:1905px;top:399.56px;width:30px"></div>
<svg class="a" style="left:1912.3px;top:404.76px" width="16" height="16"><use href="#i_info"/></svg>
<div class="t" style="left:19.7px;top:433.37px;font-size:12px;color:#1A1A1A;font-weight:400;letter-spacing:0.05px">19.06.2021</div>
<div class="t" style="left:93.5px;top:432.37px;font-size:12px;color:#1A1A1A;font-weight:400;word-spacing:1.2px">RE 2021-00005</div>
<svg class="a" style="left:189px;top:427.14px" width="22" height="21"><use href="#pencil"/></svg>
<div class="t" style="left:218.4px;top:433.37px;font-size:12px;color:#1A1A1A;font-weight:400;word-spacing:1.5px">ATRS GmbH</div>
<div class="t" style="right:1354.5px;top:433.37px;font-size:12px;color:#1A1A1A;font-weight:400;word-spacing:1.2px">&euro; 11 544,00</div>
<div class="t" style="right:1265px;top:433.37px;font-size:12px;color:#1A1A1A;font-weight:400;word-spacing:1.2px">&euro; 11 544,00</div>
<div class="t" style="right:1190px;top:433.37px;font-size:12px;color:#1A1A1A;font-weight:400;word-spacing:1.2px">&euro; 346,32</div>
<div class="t" style="right:1103.4px;top:433.37px;font-size:12px;color:#1A1A1A;font-weight:400;word-spacing:1.2px">&euro; 11 197,68</div>
<div class="t" style="right:914.8px;top:433.37px;font-size:12px;color:#1A1A1A;font-weight:400;word-spacing:1.2px">&euro; 11 197,68</div>
<div class="t" style="left:1066.7px;top:433.37px;font-size:12px;color:#1A1A1A;font-weight:400;letter-spacing:0.13px">03.07.2021</div>
<div class="t" style="left:1150.4px;top:433.37px;font-size:12px;color:#1A1A1A;font-weight:400;letter-spacing:0.13px">02.07.2021</div>
<div class="t" style="right:626.5999999999999px;top:433.37px;font-size:12px;color:#1A1A1A;font-weight:400;word-spacing:1.2px">&euro; 11 197,68</div>
<div class="b" style="left:1351px;top:425.64px;width:78px"></div>
<svg class="a" style="left:1359.6px;top:432.24px" width="16" height="16"><use href="#i_dl"/></svg>
<div class="t" style="left:1376.4px;top:432.17px;font-size:12px;color:#454545;font-weight:400;">Zahlung</div>
<div class="b" style="left:1431px;top:425.64px;width:59px"></div>
<svg class="a" style="left:1437.7px;top:431.94px" width="16" height="16"><use href="#i_pen"/></svg>
<div class="t" style="left:1455.3px;top:432.17px;font-size:12px;color:#454545;font-weight:400;">Notiz</div>
<div class="b" style="left:1575px;top:425.64px;width:78px"></div>
<svg class="a" style="left:1585.7px;top:431.24px" width="16" height="16"><use href="#i_doc"/></svg>
<div class="t" style="left:1603px;top:432.17px;font-size:12px;color:#454545;font-weight:400;">Ansicht</div>
<div class="b" style="left:1654px;top:425.64px;width:82px"></div>
<svg class="a" style="left:1661.5px;top:430.84px" width="16" height="16"><use href="#i_prn"/></svg>
<div class="t" style="left:1682px;top:432.17px;font-size:12px;color:#454545;font-weight:400;">Drucken</div>
<div class="b" style="left:1738px;top:425.64px;width:69px"></div>
<svg class="a" style="left:1746px;top:433.24px" width="16" height="16"><use href="#i_env"/></svg>
<div class="t" style="left:1764.7px;top:432.17px;font-size:12px;color:#454545;font-weight:400;">E-Mail</div>
<div class="b" style="left:1809px;top:425.64px;width:30px"></div>
<svg class="a" style="left:1817px;top:431.24px" width="16" height="16"><use href="#i_up"/></svg>
<div class="b" style="left:1841px;top:425.64px;width:30px"></div>
<svg class="a" style="left:1849px;top:431.24px" width="16" height="16"><use href="#i_dup"/></svg>
<div class="b" style="left:1873px;top:425.64px;width:30px"></div>
<svg class="a" style="left:1880.3px;top:430.84px" width="16" height="16"><use href="#i_x"/></svg>
<div class="b" style="left:1905px;top:425.64px;width:30px"></div>
<svg class="a" style="left:1912.3px;top:430.84px" width="16" height="16"><use href="#i_info"/></svg>
<div class="t" style="left:19.7px;top:459.45px;font-size:12px;color:#1A1A1A;font-weight:400;letter-spacing:0.05px">19.06.2021</div>
<div class="t" style="left:93.5px;top:458.45px;font-size:12px;color:#1A1A1A;font-weight:400;word-spacing:1.2px">RE 2021-00006</div>
<svg class="a" style="left:189px;top:453.22px" width="22" height="21"><use href="#pencil"/></svg>
<div class="t" style="left:218.4px;top:459.45px;font-size:12px;color:#1A1A1A;font-weight:400;word-spacing:1.5px">Paulitsch Gmbh</div>
<div class="t" style="right:1354.5px;top:459.45px;font-size:12px;color:#1A1A1A;font-weight:400;word-spacing:1.2px">&euro; 7 326,00</div>
<div class="t" style="right:1265px;top:459.45px;font-size:12px;color:#1A1A1A;font-weight:400;word-spacing:1.2px">&euro; 8 791,20</div>
<div class="t" style="right:1103.4px;top:459.45px;font-size:12px;color:#1A1A1A;font-weight:400;word-spacing:1.2px">&euro; 8 791,20</div>
<div class="t" style="right:914.8px;top:459.45px;font-size:12px;color:#1A1A1A;font-weight:400;word-spacing:1.2px">&euro; 8 791,20</div>
<div class="t" style="left:1066.7px;top:459.45px;font-size:12px;color:#1A1A1A;font-weight:400;letter-spacing:0.13px">03.07.2021</div>
<div class="b" style="left:1351px;top:451.72px;width:78px"></div>
<svg class="a" style="left:1359.6px;top:458.32px" width="16" height="16"><use href="#i_dl"/></svg>
<div class="t" style="left:1376.4px;top:458.25px;font-size:12px;color:#454545;font-weight:400;">Zahlung</div>
<div class="b" style="left:1431px;top:451.72px;width:59px"></div>
<svg class="a" style="left:1437.7px;top:458.02px" width="16" height="16"><use href="#i_pen"/></svg>
<div class="t" style="left:1455.3px;top:458.25px;font-size:12px;color:#454545;font-weight:400;">Notiz</div>
<div class="b" style="left:1575px;top:451.72px;width:78px"></div>
<svg class="a" style="left:1585.7px;top:457.32px" width="16" height="16"><use href="#i_doc"/></svg>
<div class="t" style="left:1603px;top:458.25px;font-size:12px;color:#454545;font-weight:400;">Ansicht</div>
<div class="b" style="left:1654px;top:451.72px;width:82px"></div>
<svg class="a" style="left:1661.5px;top:456.92px" width="16" height="16"><use href="#i_prn"/></svg>
<div class="t" style="left:1682px;top:458.25px;font-size:12px;color:#454545;font-weight:400;">Drucken</div>
<div class="b" style="left:1738px;top:451.72px;width:69px"></div>
<svg class="a" style="left:1746px;top:459.32px" width="16" height="16"><use href="#i_env"/></svg>
<div class="t" style="left:1764.7px;top:458.25px;font-size:12px;color:#454545;font-weight:400;">E-Mail</div>
<div class="b" style="left:1809px;top:451.72px;width:30px"></div>
<svg class="a" style="left:1817px;top:457.32px" width="16" height="16"><use href="#i_up"/></svg>
<div class="b" style="left:1841px;top:451.72px;width:30px"></div>
<svg class="a" style="left:1849px;top:457.32px" width="16" height="16"><use href="#i_dup"/></svg>
<div class="b" style="left:1873px;top:451.72px;width:30px"></div>
<svg class="a" style="left:1880.3px;top:456.92px" width="16" height="16"><use href="#i_x"/></svg>
<div class="b" style="left:1905px;top:451.72px;width:30px"></div>
<svg class="a" style="left:1912.3px;top:456.92px" width="16" height="16"><use href="#i_info"/></svg>
<div class="t" style="left:19.7px;top:485.53px;font-size:12px;color:#1A1A1A;font-weight:400;letter-spacing:0.05px">19.06.2021</div>
<div class="t" style="left:93.5px;top:484.53px;font-size:12px;color:#1A1A1A;font-weight:400;word-spacing:1.2px">RE 2021-00007</div>
<svg class="a" style="left:189px;top:479.30px" width="22" height="21"><use href="#pencil"/></svg>
<div class="t" style="left:218.4px;top:485.53px;font-size:12px;color:#1A1A1A;font-weight:400;word-spacing:1.5px">KLAS GmbH</div>
<div class="t" style="right:1354.5px;top:485.53px;font-size:12px;color:#1A1A1A;font-weight:400;word-spacing:1.2px">&euro; 4 884,00</div>
<div class="t" style="right:1265px;top:485.53px;font-size:12px;color:#1A1A1A;font-weight:400;word-spacing:1.2px">&euro; 4 884,00</div>
<div class="t" style="right:1103.4px;top:485.53px;font-size:12px;color:#1A1A1A;font-weight:400;word-spacing:1.2px">&euro; 4 884,00</div>
<div class="t" style="right:914.8px;top:485.53px;font-size:12px;color:#1A1A1A;font-weight:400;word-spacing:1.2px">&euro; 4 884,00</div>
<div class="t" style="left:1066.7px;top:485.53px;font-size:12px;color:#1A1A1A;font-weight:400;letter-spacing:0.13px">03.07.2021</div>
<div class="b" style="left:1351px;top:477.80px;width:78px"></div>
<svg class="a" style="left:1359.6px;top:484.40px" width="16" height="16"><use href="#i_dl"/></svg>
<div class="t" style="left:1376.4px;top:484.33px;font-size:12px;color:#454545;font-weight:400;">Zahlung</div>
<div class="b" style="left:1431px;top:477.80px;width:59px"></div>
<svg class="a" style="left:1437.7px;top:484.10px" width="16" height="16"><use href="#i_pen"/></svg>
<div class="t" style="left:1455.3px;top:484.33px;font-size:12px;color:#454545;font-weight:400;">Notiz</div>
<div class="b" style="left:1575px;top:477.80px;width:78px"></div>
<svg class="a" style="left:1585.7px;top:483.40px" width="16" height="16"><use href="#i_doc"/></svg>
<div class="t" style="left:1603px;top:484.33px;font-size:12px;color:#454545;font-weight:400;">Ansicht</div>
<div class="b" style="left:1654px;top:477.80px;width:82px"></div>
<svg class="a" style="left:1661.5px;top:483.00px" width="16" height="16"><use href="#i_prn"/></svg>
<div class="t" style="left:1682px;top:484.33px;font-size:12px;color:#454545;font-weight:400;">Drucken</div>
<div class="b" style="left:1738px;top:477.80px;width:69px"></div>
<svg class="a" style="left:1746px;top:485.40px" width="16" height="16"><use href="#i_env"/></svg>
<div class="t" style="left:1764.7px;top:484.33px;font-size:12px;color:#454545;font-weight:400;">E-Mail</div>
<div class="b" style="left:1809px;top:477.80px;width:30px"></div>
<svg class="a" style="left:1817px;top:483.40px" width="16" height="16"><use href="#i_up"/></svg>
<div class="b" style="left:1841px;top:477.80px;width:30px"></div>
<svg class="a" style="left:1849px;top:483.40px" width="16" height="16"><use href="#i_dup"/></svg>
<div class="b" style="left:1873px;top:477.80px;width:30px"></div>
<svg class="a" style="left:1880.3px;top:483.00px" width="16" height="16"><use href="#i_x"/></svg>
<div class="b" style="left:1905px;top:477.80px;width:30px"></div>
<svg class="a" style="left:1912.3px;top:483.00px" width="16" height="16"><use href="#i_info"/></svg>
<div class="t" style="left:19.7px;top:511.61px;font-size:12px;color:#1A1A1A;font-weight:400;letter-spacing:0.05px">19.06.2021</div>
<div class="t" style="left:93.5px;top:510.61px;font-size:12px;color:#1A1A1A;font-weight:400;word-spacing:1.2px">RE 2021-00008</div>
<svg class="a" style="left:189px;top:505.38px" width="22" height="21"><use href="#pencil"/></svg>
<div class="t" style="left:218.4px;top:511.61px;font-size:12px;color:#1A1A1A;font-weight:400;word-spacing:1.5px">Musterfirma GmbH</div>
<div class="t" style="right:1354.5px;top:511.61px;font-size:12px;color:#1A1A1A;font-weight:400;word-spacing:1.2px">&euro; 4 480,00</div>
<div class="t" style="right:1265px;top:511.61px;font-size:12px;color:#1A1A1A;font-weight:400;word-spacing:1.2px">&euro; 4 480,00</div>
<div class="t" style="right:1103.4px;top:511.61px;font-size:12px;color:#1A1A1A;font-weight:400;word-spacing:1.2px">&euro; 4 480,00</div>
<div class="t" style="right:914.8px;top:511.61px;font-size:12px;color:#1A1A1A;font-weight:400;word-spacing:1.2px">&euro; 4 480,00</div>
<div class="t" style="left:1066.7px;top:511.61px;font-size:12px;color:#1A1A1A;font-weight:400;letter-spacing:0.13px">03.07.2021</div>
<div class="b" style="left:1351px;top:503.88px;width:78px"></div>
<svg class="a" style="left:1359.6px;top:510.48px" width="16" height="16"><use href="#i_dl"/></svg>
<div class="t" style="left:1376.4px;top:510.41px;font-size:12px;color:#454545;font-weight:400;">Zahlung</div>
<div class="b" style="left:1431px;top:503.88px;width:59px"></div>
<svg class="a" style="left:1437.7px;top:510.18px" width="16" height="16"><use href="#i_pen"/></svg>
<div class="t" style="left:1455.3px;top:510.41px;font-size:12px;color:#454545;font-weight:400;">Notiz</div>
<div class="b" style="left:1575px;top:503.88px;width:78px"></div>
<svg class="a" style="left:1585.7px;top:509.48px" width="16" height="16"><use href="#i_doc"/></svg>
<div class="t" style="left:1603px;top:510.41px;font-size:12px;color:#454545;font-weight:400;">Ansicht</div>
<div class="b" style="left:1654px;top:503.88px;width:82px"></div>
<svg class="a" style="left:1661.5px;top:509.08px" width="16" height="16"><use href="#i_prn"/></svg>
<div class="t" style="left:1682px;top:510.41px;font-size:12px;color:#454545;font-weight:400;">Drucken</div>
<div class="b" style="left:1738px;top:503.88px;width:69px"></div>
<svg class="a" style="left:1746px;top:511.48px" width="16" height="16"><use href="#i_env"/></svg>
<div class="t" style="left:1764.7px;top:510.41px;font-size:12px;color:#454545;font-weight:400;">E-Mail</div>
<div class="b" style="left:1809px;top:503.88px;width:30px"></div>
<svg class="a" style="left:1817px;top:509.48px" width="16" height="16"><use href="#i_up"/></svg>
<div class="b" style="left:1841px;top:503.88px;width:30px"></div>
<svg class="a" style="left:1849px;top:509.48px" width="16" height="16"><use href="#i_dup"/></svg>
<div class="b" style="left:1873px;top:503.88px;width:30px"></div>
<svg class="a" style="left:1880.3px;top:509.08px" width="16" height="16"><use href="#i_x"/></svg>
<div class="b" style="left:1905px;top:503.88px;width:30px"></div>
<svg class="a" style="left:1912.3px;top:509.08px" width="16" height="16"><use href="#i_info"/></svg>
<div class="t" style="left:19.7px;top:537.69px;font-size:12px;color:#1A1A1A;font-weight:400;letter-spacing:0.05px">19.06.2021</div>
<div class="t" style="left:93.5px;top:536.69px;font-size:12px;color:#1A1A1A;font-weight:400;word-spacing:1.2px">RE 2021-00009</div>
<svg class="a" style="left:189px;top:531.46px" width="22" height="21"><use href="#pencil"/></svg>
<div class="t" style="left:218.4px;top:537.69px;font-size:12px;color:#1A1A1A;font-weight:400;word-spacing:1.5px">Musterfirma GmbH</div>
<div class="t" style="right:1354.5px;top:537.69px;font-size:12px;color:#1A1A1A;font-weight:400;word-spacing:1.2px">&euro; 13 300,00</div>
<div class="t" style="right:1265px;top:537.69px;font-size:12px;color:#1A1A1A;font-weight:400;word-spacing:1.2px">&euro; 15 960,00</div>
<div class="t" style="right:1103.4px;top:537.69px;font-size:12px;color:#1A1A1A;font-weight:400;word-spacing:1.2px">&euro; 15 960,00</div>
<div class="t" style="right:914.8px;top:537.69px;font-size:12px;color:#1A1A1A;font-weight:400;word-spacing:1.2px">&euro; 15 960,00</div>
<div class="t" style="left:1066.7px;top:537.69px;font-size:12px;color:#1A1A1A;font-weight:400;letter-spacing:0.13px">03.07.2021</div>
<div class="b" style="left:1351px;top:529.96px;width:78px"></div>
<svg class="a" style="left:1359.6px;top:536.56px" width="16" height="16"><use href="#i_dl"/></svg>
<div class="t" style="left:1376.4px;top:536.49px;font-size:12px;color:#454545;font-weight:400;">Zahlung</div>
<div class="b" style="left:1431px;top:529.96px;width:59px"></div>
<svg class="a" style="left:1437.7px;top:536.26px" width="16" height="16"><use href="#i_pen"/></svg>
<div class="t" style="left:1455.3px;top:536.49px;font-size:12px;color:#454545;font-weight:400;">Notiz</div>
<div class="b" style="left:1575px;top:529.96px;width:78px"></div>
<svg class="a" style="left:1585.7px;top:535.56px" width="16" height="16"><use href="#i_doc"/></svg>
<div class="t" style="left:1603px;top:536.49px;font-size:12px;color:#454545;font-weight:400;">Ansicht</div>
<div class="b" style="left:1654px;top:529.96px;width:82px"></div>
<svg class="a" style="left:1661.5px;top:535.16px" width="16" height="16"><use href="#i_prn"/></svg>
<div class="t" style="left:1682px;top:536.49px;font-size:12px;color:#454545;font-weight:400;">Drucken</div>
<div class="b" style="left:1738px;top:529.96px;width:69px"></div>
<svg class="a" style="left:1746px;top:537.56px" width="16" height="16"><use href="#i_env"/></svg>
<div class="t" style="left:1764.7px;top:536.49px;font-size:12px;color:#454545;font-weight:400;">E-Mail</div>
<div class="b" style="left:1809px;top:529.96px;width:30px"></div>
<svg class="a" style="left:1817px;top:535.56px" width="16" height="16"><use href="#i_up"/></svg>
<div class="b" style="left:1841px;top:529.96px;width:30px"></div>
<svg class="a" style="left:1849px;top:535.56px" width="16" height="16"><use href="#i_dup"/></svg>
<div class="b" style="left:1873px;top:529.96px;width:30px"></div>
<svg class="a" style="left:1880.3px;top:535.16px" width="16" height="16"><use href="#i_x"/></svg>
<div class="b" style="left:1905px;top:529.96px;width:30px"></div>
<svg class="a" style="left:1912.3px;top:535.16px" width="16" height="16"><use href="#i_info"/></svg>
<div class="t" style="left:19.7px;top:563.77px;font-size:12px;color:#1A1A1A;font-weight:400;letter-spacing:0.05px">19.06.2021</div>
<div class="t" style="left:93.5px;top:562.77px;font-size:12px;color:#1A1A1A;font-weight:400;word-spacing:1.2px">RE 2021-00010</div>
<svg class="a" style="left:189px;top:557.54px" width="22" height="21"><use href="#pencil"/></svg>
<div class="t" style="left:218.4px;top:563.77px;font-size:12px;color:#1A1A1A;font-weight:400;word-spacing:1.5px">ATRS GmbH</div>
<div class="t" style="right:1354.5px;top:563.77px;font-size:12px;color:#1A1A1A;font-weight:400;word-spacing:1.2px">&euro; 17 316,00</div>
<div class="t" style="right:1265px;top:563.77px;font-size:12px;color:#1A1A1A;font-weight:400;word-spacing:1.2px">&euro; 17 316,00</div>
<div class="t" style="right:1190px;top:563.77px;font-size:12px;color:#1A1A1A;font-weight:400;word-spacing:1.2px">&euro; 519,48</div>
<div class="t" style="right:1103.4px;top:563.77px;font-size:12px;color:#1A1A1A;font-weight:400;word-spacing:1.2px">&euro; 16 796,52</div>
<div class="t" style="right:914.8px;top:563.77px;font-size:12px;color:#1A1A1A;font-weight:400;word-spacing:1.2px">&euro; 16 796,52</div>
<div class="t" style="left:1066.7px;top:563.77px;font-size:12px;color:#1A1A1A;font-weight:400;letter-spacing:0.13px">03.07.2021</div>
<div class="t" style="left:1150.4px;top:563.77px;font-size:12px;color:#1A1A1A;font-weight:400;letter-spacing:0.13px">02.07.2021</div>
<div class="t" style="right:626.5999999999999px;top:563.77px;font-size:12px;color:#1A1A1A;font-weight:400;word-spacing:1.2px">&euro; 16 796,52</div>
<div class="b" style="left:1351px;top:556.04px;width:78px"></div>
<svg class="a" style="left:1359.6px;top:562.64px" width="16" height="16"><use href="#i_dl"/></svg>
<div class="t" style="left:1376.4px;top:562.57px;font-size:12px;color:#454545;font-weight:400;">Zahlung</div>
<div class="b" style="left:1431px;top:556.04px;width:59px"></div>
<svg class="a" style="left:1437.7px;top:562.34px" width="16" height="16"><use href="#i_pen"/></svg>
<div class="t" style="left:1455.3px;top:562.57px;font-size:12px;color:#454545;font-weight:400;">Notiz</div>
<div class="b" style="left:1575px;top:556.04px;width:78px"></div>
<svg class="a" style="left:1585.7px;top:561.64px" width="16" height="16"><use href="#i_doc"/></svg>
<div class="t" style="left:1603px;top:562.57px;font-size:12px;color:#454545;font-weight:400;">Ansicht</div>
<div class="b" style="left:1654px;top:556.04px;width:82px"></div>
<svg class="a" style="left:1661.5px;top:561.24px" width="16" height="16"><use href="#i_prn"/></svg>
<div class="t" style="left:1682px;top:562.57px;font-size:12px;color:#454545;font-weight:400;">Drucken</div>
<div class="b" style="left:1738px;top:556.04px;width:69px"></div>
<svg class="a" style="left:1746px;top:563.64px" width="16" height="16"><use href="#i_env"/></svg>
<div class="t" style="left:1764.7px;top:562.57px;font-size:12px;color:#454545;font-weight:400;">E-Mail</div>
<div class="b" style="left:1809px;top:556.04px;width:30px"></div>
<svg class="a" style="left:1817px;top:561.64px" width="16" height="16"><use href="#i_up"/></svg>
<div class="b" style="left:1841px;top:556.04px;width:30px"></div>
<svg class="a" style="left:1849px;top:561.64px" width="16" height="16"><use href="#i_dup"/></svg>
<div class="b" style="left:1873px;top:556.04px;width:30px"></div>
<svg class="a" style="left:1880.3px;top:561.24px" width="16" height="16"><use href="#i_x"/></svg>
<div class="b" style="left:1905px;top:556.04px;width:30px"></div>
<svg class="a" style="left:1912.3px;top:561.24px" width="16" height="16"><use href="#i_info"/></svg>
<div class="t" style="left:19.7px;top:589.85px;font-size:12px;color:#1A1A1A;font-weight:400;letter-spacing:0.05px">19.06.2021</div>
<div class="t" style="left:93.5px;top:588.85px;font-size:12px;color:#1A1A1A;font-weight:400;word-spacing:1.2px">RE 2021-00011</div>
<svg class="a" style="left:189px;top:583.62px" width="22" height="21"><use href="#pencil"/></svg>
<div class="t" style="left:218.4px;top:589.85px;font-size:12px;color:#1A1A1A;font-weight:400;word-spacing:1.5px">ATRS GmbH</div>
<div class="t" style="right:1354.5px;top:589.85px;font-size:12px;color:#1A1A1A;font-weight:400;word-spacing:1.2px">&euro; 5 772,00</div>
<div class="t" style="right:1265px;top:589.85px;font-size:12px;color:#1A1A1A;font-weight:400;word-spacing:1.2px">&euro; 6 926,40</div>
<div class="t" style="right:1103.4px;top:589.85px;font-size:12px;color:#1A1A1A;font-weight:400;word-spacing:1.2px">&euro; 6 926,40</div>
<div class="t" style="right:914.8px;top:589.85px;font-size:12px;color:#1A1A1A;font-weight:400;word-spacing:1.2px">&euro; 6 926,40</div>
<div class="t" style="left:1066.7px;top:589.85px;font-size:12px;color:#1A1A1A;font-weight:400;letter-spacing:0.13px">03.07.2021</div>
<div class="b" style="left:1351px;top:582.12px;width:78px"></div>
<svg class="a" style="left:1359.6px;top:588.72px" width="16" height="16"><use href="#i_dl"/></svg>
<div class="t" style="left:1376.4px;top:588.65px;font-size:12px;color:#454545;font-weight:400;">Zahlung</div>
<div class="b" style="left:1431px;top:582.12px;width:59px"></div>
<svg class="a" style="left:1437.7px;top:588.42px" width="16" height="16"><use href="#i_pen"/></svg>
<div class="t" style="left:1455.3px;top:588.65px;font-size:12px;color:#454545;font-weight:400;">Notiz</div>
<div class="b" style="left:1575px;top:582.12px;width:78px"></div>
<svg class="a" style="left:1585.7px;top:587.72px" width="16" height="16"><use href="#i_doc"/></svg>
<div class="t" style="left:1603px;top:588.65px;font-size:12px;color:#454545;font-weight:400;">Ansicht</div>
<div class="b" style="left:1654px;top:582.12px;width:82px"></div>
<svg class="a" style="left:1661.5px;top:587.32px" width="16" height="16"><use href="#i_prn"/></svg>
<div class="t" style="left:1682px;top:588.65px;font-size:12px;color:#454545;font-weight:400;">Drucken</div>
<div class="b" style="left:1738px;top:582.12px;width:69px"></div>
<svg class="a" style="left:1746px;top:589.72px" width="16" height="16"><use href="#i_env"/></svg>
<div class="t" style="left:1764.7px;top:588.65px;font-size:12px;color:#454545;font-weight:400;">E-Mail</div>
<div class="b" style="left:1809px;top:582.12px;width:30px"></div>
<svg class="a" style="left:1817px;top:587.72px" width="16" height="16"><use href="#i_up"/></svg>
<div class="b" style="left:1841px;top:582.12px;width:30px"></div>
<svg class="a" style="left:1849px;top:587.72px" width="16" height="16"><use href="#i_dup"/></svg>
<div class="b" style="left:1873px;top:582.12px;width:30px"></div>
<svg class="a" style="left:1880.3px;top:587.32px" width="16" height="16"><use href="#i_x"/></svg>
<div class="b" style="left:1905px;top:582.12px;width:30px"></div>
<svg class="a" style="left:1912.3px;top:587.32px" width="16" height="16"><use href="#i_info"/></svg>
<div class="t" style="left:19.7px;top:615.93px;font-size:12px;color:#1A1A1A;font-weight:400;letter-spacing:0.05px">19.06.2021</div>
<div class="t" style="left:93.5px;top:614.93px;font-size:12px;color:#1A1A1A;font-weight:400;word-spacing:1.2px">RE 2021-00012</div>
<svg class="a" style="left:189px;top:609.70px" width="22" height="21"><use href="#pencil"/></svg>
<div class="t" style="left:218.4px;top:615.93px;font-size:12px;color:#1A1A1A;font-weight:400;word-spacing:1.5px">ATRS GmbH</div>
<div class="t" style="right:1354.5px;top:615.93px;font-size:12px;color:#1A1A1A;font-weight:400;word-spacing:1.2px">&euro; 11 492,00</div>
<div class="t" style="right:1265px;top:615.93px;font-size:12px;color:#1A1A1A;font-weight:400;word-spacing:1.2px">&euro; 13 790,40</div>
<div class="t" style="right:1190px;top:615.93px;font-size:12px;color:#1A1A1A;font-weight:400;word-spacing:1.2px">&euro; 413,71</div>
<div class="t" style="right:1103.4px;top:615.93px;font-size:12px;color:#1A1A1A;font-weight:400;word-spacing:1.2px">&euro; 13 376,69</div>
<div class="t" style="right:914.8px;top:615.93px;font-size:12px;color:#1A1A1A;font-weight:400;word-spacing:1.2px">&euro; 13 376,69</div>
<div class="t" style="left:1066.7px;top:615.93px;font-size:12px;color:#1A1A1A;font-weight:400;letter-spacing:0.13px">03.07.2021</div>
<div class="t" style="left:1150.4px;top:615.93px;font-size:12px;color:#1A1A1A;font-weight:400;letter-spacing:0.13px">02.07.2021</div>
<div class="t" style="right:626.5999999999999px;top:615.93px;font-size:12px;color:#1A1A1A;font-weight:400;word-spacing:1.2px">&euro; 13 376,69</div>
<div class="b" style="left:1351px;top:608.20px;width:78px"></div>
<svg class="a" style="left:1359.6px;top:614.80px" width="16" height="16"><use href="#i_dl"/></svg>
<div class="t" style="left:1376.4px;top:614.73px;font-size:12px;color:#454545;font-weight:400;">Zahlung</div>
<div class="b" style="left:1431px;top:608.20px;width:59px"></div>
<svg class="a" style="left:1437.7px;top:614.50px" width="16" height="16"><use href="#i_pen"/></svg>
<div class="t" style="left:1455.3px;top:614.73px;font-size:12px;color:#454545;font-weight:400;">Notiz</div>
<div class="b" style="left:1575px;top:608.20px;width:78px"></div>
<svg class="a" style="left:1585.7px;top:613.80px" width="16" height="16"><use href="#i_doc"/></svg>
<div class="t" style="left:1603px;top:614.73px;font-size:12px;color:#454545;font-weight:400;">Ansicht</div>
<div class="b" style="left:1654px;top:608.20px;width:82px"></div>
<svg class="a" style="left:1661.5px;top:613.40px" width="16" height="16"><use href="#i_prn"/></svg>
<div class="t" style="left:1682px;top:614.73px;font-size:12px;color:#454545;font-weight:400;">Drucken</div>
<div class="b" style="left:1738px;top:608.20px;width:69px"></div>
<svg class="a" style="left:1746px;top:615.80px" width="16" height="16"><use href="#i_env"/></svg>
<div class="t" style="left:1764.7px;top:614.73px;font-size:12px;color:#454545;font-weight:400;">E-Mail</div>
<div class="b" style="left:1809px;top:608.20px;width:30px"></div>
<svg class="a" style="left:1817px;top:613.80px" width="16" height="16"><use href="#i_up"/></svg>
<div class="b" style="left:1841px;top:608.20px;width:30px"></div>
<svg class="a" style="left:1849px;top:613.80px" width="16" height="16"><use href="#i_dup"/></svg>
<div class="b" style="left:1873px;top:608.20px;width:30px"></div>
<svg class="a" style="left:1880.3px;top:613.40px" width="16" height="16"><use href="#i_x"/></svg>
<div class="b" style="left:1905px;top:608.20px;width:30px"></div>
<svg class="a" style="left:1912.3px;top:613.40px" width="16" height="16"><use href="#i_info"/></svg>
<div class="t" style="left:19.7px;top:642.01px;font-size:12px;color:#1A1A1A;font-weight:400;letter-spacing:0.05px">19.06.2021</div>
<div class="t" style="left:93.5px;top:641.01px;font-size:12px;color:#1A1A1A;font-weight:400;word-spacing:1.2px">RE 2021-00013</div>
<svg class="a" style="left:189px;top:635.78px" width="22" height="21"><use href="#pencil"/></svg>
<div class="t" style="left:218.4px;top:642.01px;font-size:12px;color:#1A1A1A;font-weight:400;word-spacing:1.5px">ATRS GmbH</div>
<div class="t" style="right:1354.5px;top:642.01px;font-size:12px;color:#1A1A1A;font-weight:400;word-spacing:1.2px">&euro; 5 772,00</div>
<div class="t" style="right:1265px;top:642.01px;font-size:12px;color:#1A1A1A;font-weight:400;word-spacing:1.2px">&euro; 6 926,40</div>
<div class="t" style="right:1103.4px;top:642.01px;font-size:12px;color:#1A1A1A;font-weight:400;word-spacing:1.2px">&euro; 6 926,40</div>
<div class="t" style="right:914.8px;top:642.01px;font-size:12px;color:#1A1A1A;font-weight:400;word-spacing:1.2px">&euro; 6 926,40</div>
<div class="t" style="left:1066.7px;top:642.01px;font-size:12px;color:#1A1A1A;font-weight:400;letter-spacing:0.13px">03.07.2021</div>
<div class="b" style="left:1351px;top:634.28px;width:78px"></div>
<svg class="a" style="left:1359.6px;top:640.88px" width="16" height="16"><use href="#i_dl"/></svg>
<div class="t" style="left:1376.4px;top:640.81px;font-size:12px;color:#454545;font-weight:400;">Zahlung</div>
<div class="b" style="left:1431px;top:634.28px;width:59px"></div>
<svg class="a" style="left:1437.7px;top:640.58px" width="16" height="16"><use href="#i_pen"/></svg>
<div class="t" style="left:1455.3px;top:640.81px;font-size:12px;color:#454545;font-weight:400;">Notiz</div>
<div class="b" style="left:1575px;top:634.28px;width:78px"></div>
<svg class="a" style="left:1585.7px;top:639.88px" width="16" height="16"><use href="#i_doc"/></svg>
<div class="t" style="left:1603px;top:640.81px;font-size:12px;color:#454545;font-weight:400;">Ansicht</div>
<div class="b" style="left:1654px;top:634.28px;width:82px"></div>
<svg class="a" style="left:1661.5px;top:639.48px" width="16" height="16"><use href="#i_prn"/></svg>
<div class="t" style="left:1682px;top:640.81px;font-size:12px;color:#454545;font-weight:400;">Drucken</div>
<div class="b" style="left:1738px;top:634.28px;width:69px"></div>
<svg class="a" style="left:1746px;top:641.88px" width="16" height="16"><use href="#i_env"/></svg>
<div class="t" style="left:1764.7px;top:640.81px;font-size:12px;color:#454545;font-weight:400;">E-Mail</div>
<div class="b" style="left:1809px;top:634.28px;width:30px"></div>
<svg class="a" style="left:1817px;top:639.88px" width="16" height="16"><use href="#i_up"/></svg>
<div class="b" style="left:1841px;top:634.28px;width:30px"></div>
<svg class="a" style="left:1849px;top:639.88px" width="16" height="16"><use href="#i_dup"/></svg>
<div class="b" style="left:1873px;top:634.28px;width:30px"></div>
<svg class="a" style="left:1880.3px;top:639.48px" width="16" height="16"><use href="#i_x"/></svg>
<div class="b" style="left:1905px;top:634.28px;width:30px"></div>
<svg class="a" style="left:1912.3px;top:639.48px" width="16" height="16"><use href="#i_info"/></svg>
<div class="t" style="left:19.7px;top:668.09px;font-size:12px;color:#1A1A1A;font-weight:400;letter-spacing:0.05px">19.06.2021</div>
<div class="t" style="left:93.5px;top:667.09px;font-size:12px;color:#1A1A1A;font-weight:400;word-spacing:1.2px">RE 2021-00014</div>
<svg class="a" style="left:189px;top:661.86px" width="22" height="21"><use href="#pencil"/></svg>
<div class="t" style="left:218.4px;top:668.09px;font-size:12px;color:#1A1A1A;font-weight:400;word-spacing:1.5px">ATRS GmbH</div>
<div class="t" style="right:1354.5px;top:668.09px;font-size:12px;color:#1A1A1A;font-weight:400;word-spacing:1.2px">&euro; 5 148,00</div>
<div class="t" style="right:1265px;top:668.09px;font-size:12px;color:#1A1A1A;font-weight:400;word-spacing:1.2px">&euro; 6 177,60</div>
<div class="t" style="right:1103.4px;top:668.09px;font-size:12px;color:#1A1A1A;font-weight:400;word-spacing:1.2px">&euro; 6 177,60</div>
<div class="t" style="right:914.8px;top:668.09px;font-size:12px;color:#1A1A1A;font-weight:400;word-spacing:1.2px">&euro; 6 177,60</div>
<div class="t" style="left:1066.7px;top:668.09px;font-size:12px;color:#1A1A1A;font-weight:400;letter-spacing:0.13px">03.07.2021</div>
<div class="b" style="left:1351px;top:660.36px;width:78px"></div>
<svg class="a" style="left:1359.6px;top:666.96px" width="16" height="16"><use href="#i_dl"/></svg>
<div class="t" style="left:1376.4px;top:666.89px;font-size:12px;color:#454545;font-weight:400;">Zahlung</div>
<div class="b" style="left:1431px;top:660.36px;width:59px"></div>
<svg class="a" style="left:1437.7px;top:666.66px" width="16" height="16"><use href="#i_pen"/></svg>
<div class="t" style="left:1455.3px;top:666.89px;font-size:12px;color:#454545;font-weight:400;">Notiz</div>
<div class="b" style="left:1575px;top:660.36px;width:78px"></div>
<svg class="a" style="left:1585.7px;top:665.96px" width="16" height="16"><use href="#i_doc"/></svg>
<div class="t" style="left:1603px;top:666.89px;font-size:12px;color:#454545;font-weight:400;">Ansicht</div>
<div class="b" style="left:1654px;top:660.36px;width:82px"></div>
<svg class="a" style="left:1661.5px;top:665.56px" width="16" height="16"><use href="#i_prn"/></svg>
<div class="t" style="left:1682px;top:666.89px;font-size:12px;color:#454545;font-weight:400;">Drucken</div>
<div class="b" style="left:1738px;top:660.36px;width:69px"></div>
<svg class="a" style="left:1746px;top:667.96px" width="16" height="16"><use href="#i_env"/></svg>
<div class="t" style="left:1764.7px;top:666.89px;font-size:12px;color:#454545;font-weight:400;">E-Mail</div>
<div class="b" style="left:1809px;top:660.36px;width:30px"></div>
<svg class="a" style="left:1817px;top:665.96px" width="16" height="16"><use href="#i_up"/></svg>
<div class="b" style="left:1841px;top:660.36px;width:30px"></div>
<svg class="a" style="left:1849px;top:665.96px" width="16" height="16"><use href="#i_dup"/></svg>
<div class="b" style="left:1873px;top:660.36px;width:30px"></div>
<svg class="a" style="left:1880.3px;top:665.56px" width="16" height="16"><use href="#i_x"/></svg>
<div class="b" style="left:1905px;top:660.36px;width:30px"></div>
<svg class="a" style="left:1912.3px;top:665.56px" width="16" height="16"><use href="#i_info"/></svg>
<div class="t" style="left:19.7px;top:694.17px;font-size:12px;color:#1A1A1A;font-weight:400;letter-spacing:0.05px">19.06.2021</div>
<div class="t" style="left:93.5px;top:693.17px;font-size:12px;color:#1A1A1A;font-weight:400;word-spacing:1.2px">RE 2021-00015</div>
<svg class="a" style="left:189px;top:687.94px" width="22" height="21"><use href="#pencil"/></svg>
<div class="t" style="left:218.4px;top:694.17px;font-size:12px;color:#1A1A1A;font-weight:400;word-spacing:1.5px">ATRS GmbH</div>
<div class="t" style="right:1354.5px;top:694.17px;font-size:12px;color:#1A1A1A;font-weight:400;word-spacing:1.2px">&euro; 19 541,00</div>
<div class="t" style="right:1265px;top:694.17px;font-size:12px;color:#1A1A1A;font-weight:400;word-spacing:1.2px">&euro; 19 541,00</div>
<div class="t" style="right:1190px;top:694.17px;font-size:12px;color:#1A1A1A;font-weight:400;word-spacing:1.2px">&euro; 586,23</div>
<div class="t" style="right:1103.4px;top:694.17px;font-size:12px;color:#1A1A1A;font-weight:400;word-spacing:1.2px">&euro; 18 954,77</div>
<div class="t" style="right:914.8px;top:694.17px;font-size:12px;color:#1A1A1A;font-weight:400;word-spacing:1.2px">&euro; 18 954,77</div>
<div class="t" style="left:1066.7px;top:694.17px;font-size:12px;color:#1A1A1A;font-weight:400;letter-spacing:0.13px">03.07.2021</div>
<div class="t" style="left:1150.4px;top:694.17px;font-size:12px;color:#1A1A1A;font-weight:400;letter-spacing:0.13px">02.07.2021</div>
<div class="t" style="right:626.5999999999999px;top:694.17px;font-size:12px;color:#1A1A1A;font-weight:400;word-spacing:1.2px">&euro; 18 954,77</div>
<div class="b" style="left:1351px;top:686.44px;width:78px"></div>
<svg class="a" style="left:1359.6px;top:693.04px" width="16" height="16"><use href="#i_dl"/></svg>
<div class="t" style="left:1376.4px;top:692.97px;font-size:12px;color:#454545;font-weight:400;">Zahlung</div>
<div class="b" style="left:1431px;top:686.44px;width:59px"></div>
<svg class="a" style="left:1437.7px;top:692.74px" width="16" height="16"><use href="#i_pen"/></svg>
<div class="t" style="left:1455.3px;top:692.97px;font-size:12px;color:#454545;font-weight:400;">Notiz</div>
<div class="b" style="left:1575px;top:686.44px;width:78px"></div>
<svg class="a" style="left:1585.7px;top:692.04px" width="16" height="16"><use href="#i_doc"/></svg>
<div class="t" style="left:1603px;top:692.97px;font-size:12px;color:#454545;font-weight:400;">Ansicht</div>
<div class="b" style="left:1654px;top:686.44px;width:82px"></div>
<svg class="a" style="left:1661.5px;top:691.64px" width="16" height="16"><use href="#i_prn"/></svg>
<div class="t" style="left:1682px;top:692.97px;font-size:12px;color:#454545;font-weight:400;">Drucken</div>
<div class="b" style="left:1738px;top:686.44px;width:69px"></div>
<svg class="a" style="left:1746px;top:694.04px" width="16" height="16"><use href="#i_env"/></svg>
<div class="t" style="left:1764.7px;top:692.97px;font-size:12px;color:#454545;font-weight:400;">E-Mail</div>
<div class="b" style="left:1809px;top:686.44px;width:30px"></div>
<svg class="a" style="left:1817px;top:692.04px" width="16" height="16"><use href="#i_up"/></svg>
<div class="b" style="left:1841px;top:686.44px;width:30px"></div>
<svg class="a" style="left:1849px;top:692.04px" width="16" height="16"><use href="#i_dup"/></svg>
<div class="b" style="left:1873px;top:686.44px;width:30px"></div>
<svg class="a" style="left:1880.3px;top:691.64px" width="16" height="16"><use href="#i_x"/></svg>
<div class="b" style="left:1905px;top:686.44px;width:30px"></div>
<svg class="a" style="left:1912.3px;top:691.64px" width="16" height="16"><use href="#i_info"/></svg>
<div class="t" style="left:19.7px;top:720.25px;font-size:12px;color:#1A1A1A;font-weight:400;letter-spacing:0.05px">19.06.2021</div>
<div class="t" style="left:93.5px;top:719.25px;font-size:12px;color:#1A1A1A;font-weight:400;word-spacing:1.2px">RE 2021-00016</div>
<svg class="a" style="left:189px;top:714.02px" width="22" height="21"><use href="#pencil"/></svg>
<div class="t" style="left:218.4px;top:720.25px;font-size:12px;color:#1A1A1A;font-weight:400;word-spacing:1.5px">Musterfirma GmbH</div>
<div class="t" style="right:1354.5px;top:720.25px;font-size:12px;color:#1A1A1A;font-weight:400;word-spacing:1.2px">&euro; 7 326,00</div>
<div class="t" style="right:1265px;top:720.25px;font-size:12px;color:#1A1A1A;font-weight:400;word-spacing:1.2px">&euro; 8 791,20</div>
<div class="t" style="right:1103.4px;top:720.25px;font-size:12px;color:#1A1A1A;font-weight:400;word-spacing:1.2px">&euro; 8 791,20</div>
<div class="t" style="right:914.8px;top:720.25px;font-size:12px;color:#1A1A1A;font-weight:400;word-spacing:1.2px">&euro; 8 791,20</div>
<div class="t" style="left:1066.7px;top:720.25px;font-size:12px;color:#1A1A1A;font-weight:400;letter-spacing:0.13px">03.07.2021</div>
<div class="b" style="left:1351px;top:712.52px;width:78px"></div>
<svg class="a" style="left:1359.6px;top:719.12px" width="16" height="16"><use href="#i_dl"/></svg>
<div class="t" style="left:1376.4px;top:719.05px;font-size:12px;color:#454545;font-weight:400;">Zahlung</div>
<div class="b" style="left:1431px;top:712.52px;width:59px"></div>
<svg class="a" style="left:1437.7px;top:718.82px" width="16" height="16"><use href="#i_pen"/></svg>
<div class="t" style="left:1455.3px;top:719.05px;font-size:12px;color:#454545;font-weight:400;">Notiz</div>
<div class="b" style="left:1575px;top:712.52px;width:78px"></div>
<svg class="a" style="left:1585.7px;top:718.12px" width="16" height="16"><use href="#i_doc"/></svg>
<div class="t" style="left:1603px;top:719.05px;font-size:12px;color:#454545;font-weight:400;">Ansicht</div>
<div class="b" style="left:1654px;top:712.52px;width:82px"></div>
<svg class="a" style="left:1661.5px;top:717.72px" width="16" height="16"><use href="#i_prn"/></svg>
<div class="t" style="left:1682px;top:719.05px;font-size:12px;color:#454545;font-weight:400;">Drucken</div>
<div class="b" style="left:1738px;top:712.52px;width:69px"></div>
<svg class="a" style="left:1746px;top:720.12px" width="16" height="16"><use href="#i_env"/></svg>
<div class="t" style="left:1764.7px;top:719.05px;font-size:12px;color:#454545;font-weight:400;">E-Mail</div>
<div class="b" style="left:1809px;top:712.52px;width:30px"></div>
<svg class="a" style="left:1817px;top:718.12px" width="16" height="16"><use href="#i_up"/></svg>
<div class="b" style="left:1841px;top:712.52px;width:30px"></div>
<svg class="a" style="left:1849px;top:718.12px" width="16" height="16"><use href="#i_dup"/></svg>
<div class="b" style="left:1873px;top:712.52px;width:30px"></div>
<svg class="a" style="left:1880.3px;top:717.72px" width="16" height="16"><use href="#i_x"/></svg>
<div class="b" style="left:1905px;top:712.52px;width:30px"></div>
<svg class="a" style="left:1912.3px;top:717.72px" width="16" height="16"><use href="#i_info"/></svg>
<div class="t" style="left:19.7px;top:746.33px;font-size:12px;color:#1A1A1A;font-weight:400;letter-spacing:0.05px">19.06.2021</div>
<div class="t" style="left:93.5px;top:745.33px;font-size:12px;color:#1A1A1A;font-weight:400;word-spacing:1.2px">RE 2021-00017</div>
<svg class="a" style="left:189px;top:740.10px" width="22" height="21"><use href="#pencil"/></svg>
<div class="t" style="left:218.4px;top:746.33px;font-size:12px;color:#1A1A1A;font-weight:400;word-spacing:1.5px">Musterfirma GmbH</div>
<div class="t" style="right:1354.5px;top:746.33px;font-size:12px;color:#1A1A1A;font-weight:400;word-spacing:1.2px">&euro; 4 884,00</div>
<div class="t" style="right:1265px;top:746.33px;font-size:12px;color:#1A1A1A;font-weight:400;word-spacing:1.2px">&euro; 4 884,00</div>
<div class="t" style="right:1190px;top:746.33px;font-size:12px;color:#1A1A1A;font-weight:400;word-spacing:1.2px">&euro; 146,52</div>
<div class="t" style="right:1103.4px;top:746.33px;font-size:12px;color:#1A1A1A;font-weight:400;word-spacing:1.2px">&euro; 4 737,48</div>
<div class="t" style="right:914.8px;top:746.33px;font-size:12px;color:#1A1A1A;font-weight:400;word-spacing:1.2px">&euro; 4 737,48</div>
<div class="t" style="left:1066.7px;top:746.33px;font-size:12px;color:#1A1A1A;font-weight:400;letter-spacing:0.13px">03.07.2021</div>
<div class="t" style="left:1150.4px;top:746.33px;font-size:12px;color:#1A1A1A;font-weight:400;letter-spacing:0.13px">02.07.2021</div>
<div class="t" style="right:626.5999999999999px;top:746.33px;font-size:12px;color:#1A1A1A;font-weight:400;word-spacing:1.2px">&euro; 4 737,48</div>
<div class="b" style="left:1351px;top:738.60px;width:78px"></div>
<svg class="a" style="left:1359.6px;top:745.20px" width="16" height="16"><use href="#i_dl"/></svg>
<div class="t" style="left:1376.4px;top:745.13px;font-size:12px;color:#454545;font-weight:400;">Zahlung</div>
<div class="b" style="left:1431px;top:738.60px;width:59px"></div>
<svg class="a" style="left:1437.7px;top:744.90px" width="16" height="16"><use href="#i_pen"/></svg>
<div class="t" style="left:1455.3px;top:745.13px;font-size:12px;color:#454545;font-weight:400;">Notiz</div>
<div class="b" style="left:1575px;top:738.60px;width:78px"></div>
<svg class="a" style="left:1585.7px;top:744.20px" width="16" height="16"><use href="#i_doc"/></svg>
<div class="t" style="left:1603px;top:745.13px;font-size:12px;color:#454545;font-weight:400;">Ansicht</div>
<div class="b" style="left:1654px;top:738.60px;width:82px"></div>
<svg class="a" style="left:1661.5px;top:743.80px" width="16" height="16"><use href="#i_prn"/></svg>
<div class="t" style="left:1682px;top:745.13px;font-size:12px;color:#454545;font-weight:400;">Drucken</div>
<div class="b" style="left:1738px;top:738.60px;width:69px"></div>
<svg class="a" style="left:1746px;top:746.20px" width="16" height="16"><use href="#i_env"/></svg>
<div class="t" style="left:1764.7px;top:745.13px;font-size:12px;color:#454545;font-weight:400;">E-Mail</div>
<div class="b" style="left:1809px;top:738.60px;width:30px"></div>
<svg class="a" style="left:1817px;top:744.20px" width="16" height="16"><use href="#i_up"/></svg>
<div class="b" style="left:1841px;top:738.60px;width:30px"></div>
<svg class="a" style="left:1849px;top:744.20px" width="16" height="16"><use href="#i_dup"/></svg>
<div class="b" style="left:1873px;top:738.60px;width:30px"></div>
<svg class="a" style="left:1880.3px;top:743.80px" width="16" height="16"><use href="#i_x"/></svg>
<div class="b" style="left:1905px;top:738.60px;width:30px"></div>
<svg class="a" style="left:1912.3px;top:743.80px" width="16" height="16"><use href="#i_info"/></svg>
<div class="t" style="left:19.7px;top:772.41px;font-size:12px;color:#1A1A1A;font-weight:400;letter-spacing:0.05px">19.06.2021</div>
<div class="t" style="left:93.5px;top:771.41px;font-size:12px;color:#1A1A1A;font-weight:400;word-spacing:1.2px">RE 2021-00018</div>
<svg class="a" style="left:189px;top:766.18px" width="22" height="21"><use href="#pencil"/></svg>
<div class="t" style="left:218.4px;top:772.41px;font-size:12px;color:#1A1A1A;font-weight:400;word-spacing:1.5px">Musterfirma GmbH</div>
<div class="t" style="right:1354.5px;top:772.41px;font-size:12px;color:#1A1A1A;font-weight:400;word-spacing:1.2px">&euro; 9 768,00</div>
<div class="t" style="right:1265px;top:772.41px;font-size:12px;color:#1A1A1A;font-weight:400;word-spacing:1.2px">&euro; 11 721,60</div>
<div class="t" style="right:1103.4px;top:772.41px;font-size:12px;color:#1A1A1A;font-weight:400;word-spacing:1.2px">&euro; 11 721,60</div>
<div class="t" style="right:914.8px;top:772.41px;font-size:12px;color:#1A1A1A;font-weight:400;word-spacing:1.2px">&euro; 11 721,60</div>
<div class="t" style="left:1066.7px;top:772.41px;font-size:12px;color:#1A1A1A;font-weight:400;letter-spacing:0.13px">03.07.2021</div>
<div class="b" style="left:1351px;top:764.68px;width:78px"></div>
<svg class="a" style="left:1359.6px;top:771.28px" width="16" height="16"><use href="#i_dl"/></svg>
<div class="t" style="left:1376.4px;top:771.21px;font-size:12px;color:#454545;font-weight:400;">Zahlung</div>
<div class="b" style="left:1431px;top:764.68px;width:59px"></div>
<svg class="a" style="left:1437.7px;top:770.98px" width="16" height="16"><use href="#i_pen"/></svg>
<div class="t" style="left:1455.3px;top:771.21px;font-size:12px;color:#454545;font-weight:400;">Notiz</div>
<div class="b" style="left:1575px;top:764.68px;width:78px"></div>
<svg class="a" style="left:1585.7px;top:770.28px" width="16" height="16"><use href="#i_doc"/></svg>
<div class="t" style="left:1603px;top:771.21px;font-size:12px;color:#454545;font-weight:400;">Ansicht</div>
<div class="b" style="left:1654px;top:764.68px;width:82px"></div>
<svg class="a" style="left:1661.5px;top:769.88px" width="16" height="16"><use href="#i_prn"/></svg>
<div class="t" style="left:1682px;top:771.21px;font-size:12px;color:#454545;font-weight:400;">Drucken</div>
<div class="b" style="left:1738px;top:764.68px;width:69px"></div>
<svg class="a" style="left:1746px;top:772.28px" width="16" height="16"><use href="#i_env"/></svg>
<div class="t" style="left:1764.7px;top:771.21px;font-size:12px;color:#454545;font-weight:400;">E-Mail</div>
<div class="b" style="left:1809px;top:764.68px;width:30px"></div>
<svg class="a" style="left:1817px;top:770.28px" width="16" height="16"><use href="#i_up"/></svg>
<div class="b" style="left:1841px;top:764.68px;width:30px"></div>
<svg class="a" style="left:1849px;top:770.28px" width="16" height="16"><use href="#i_dup"/></svg>
<div class="b" style="left:1873px;top:764.68px;width:30px"></div>
<svg class="a" style="left:1880.3px;top:769.88px" width="16" height="16"><use href="#i_x"/></svg>
<div class="b" style="left:1905px;top:764.68px;width:30px"></div>
<svg class="a" style="left:1912.3px;top:769.88px" width="16" height="16"><use href="#i_info"/></svg>
<div class="t" style="left:19.7px;top:798.49px;font-size:12px;color:#1A1A1A;font-weight:400;letter-spacing:0.05px">19.06.2021</div>
<div class="t" style="left:93.5px;top:797.49px;font-size:12px;color:#1A1A1A;font-weight:400;word-spacing:1.2px">RE 2021-00019</div>
<svg class="a" style="left:189px;top:792.26px" width="22" height="21"><use href="#pencil"/></svg>
<div class="t" style="left:218.4px;top:798.49px;font-size:12px;color:#1A1A1A;font-weight:400;word-spacing:1.5px">Musterfirma GmbH</div>
<div class="t" style="right:1354.5px;top:798.49px;font-size:12px;color:#1A1A1A;font-weight:400;word-spacing:1.2px">&euro; 7 326,00</div>
<div class="t" style="right:1265px;top:798.49px;font-size:12px;color:#1A1A1A;font-weight:400;word-spacing:1.2px">&euro; 7 326,00</div>
<div class="t" style="right:1190px;top:798.49px;font-size:12px;color:#1A1A1A;font-weight:400;word-spacing:1.2px">&euro; 219,78</div>
<div class="t" style="right:1103.4px;top:798.49px;font-size:12px;color:#1A1A1A;font-weight:400;word-spacing:1.2px">&euro; 7 106,22</div>
<div class="t" style="right:914.8px;top:798.49px;font-size:12px;color:#1A1A1A;font-weight:400;word-spacing:1.2px">&euro; 7 106,22</div>
<div class="t" style="left:1066.7px;top:798.49px;font-size:12px;color:#1A1A1A;font-weight:400;letter-spacing:0.13px">03.07.2021</div>
<div class="t" style="left:1150.4px;top:798.49px;font-size:12px;color:#1A1A1A;font-weight:400;letter-spacing:0.13px">02.07.2021</div>
<div class="t" style="right:626.5999999999999px;top:798.49px;font-size:12px;color:#1A1A1A;font-weight:400;word-spacing:1.2px">&euro; 7 106,22</div>
<div class="b" style="left:1351px;top:790.76px;width:78px"></div>
<svg class="a" style="left:1359.6px;top:797.36px" width="16" height="16"><use href="#i_dl"/></svg>
<div class="t" style="left:1376.4px;top:797.29px;font-size:12px;color:#454545;font-weight:400;">Zahlung</div>
<div class="b" style="left:1431px;top:790.76px;width:59px"></div>
<svg class="a" style="left:1437.7px;top:797.06px" width="16" height="16"><use href="#i_pen"/></svg>
<div class="t" style="left:1455.3px;top:797.29px;font-size:12px;color:#454545;font-weight:400;">Notiz</div>
<div class="b" style="left:1575px;top:790.76px;width:78px"></div>
<svg class="a" style="left:1585.7px;top:796.36px" width="16" height="16"><use href="#i_doc"/></svg>
<div class="t" style="left:1603px;top:797.29px;font-size:12px;color:#454545;font-weight:400;">Ansicht</div>
<div class="b" style="left:1654px;top:790.76px;width:82px"></div>
<svg class="a" style="left:1661.5px;top:795.96px" width="16" height="16"><use href="#i_prn"/></svg>
<div class="t" style="left:1682px;top:797.29px;font-size:12px;color:#454545;font-weight:400;">Drucken</div>
<div class="b" style="left:1738px;top:790.76px;width:69px"></div>
<svg class="a" style="left:1746px;top:798.36px" width="16" height="16"><use href="#i_env"/></svg>
<div class="t" style="left:1764.7px;top:797.29px;font-size:12px;color:#454545;font-weight:400;">E-Mail</div>
<div class="b" style="left:1809px;top:790.76px;width:30px"></div>
<svg class="a" style="left:1817px;top:796.36px" width="16" height="16"><use href="#i_up"/></svg>
<div class="b" style="left:1841px;top:790.76px;width:30px"></div>
<svg class="a" style="left:1849px;top:796.36px" width="16" height="16"><use href="#i_dup"/></svg>
<div class="b" style="left:1873px;top:790.76px;width:30px"></div>
<svg class="a" style="left:1880.3px;top:795.96px" width="16" height="16"><use href="#i_x"/></svg>
<div class="b" style="left:1905px;top:790.76px;width:30px"></div>
<svg class="a" style="left:1912.3px;top:795.96px" width="16" height="16"><use href="#i_info"/></svg>
<div class="t" style="left:19.7px;top:824.57px;font-size:12px;color:#1A1A1A;font-weight:400;letter-spacing:0.05px">19.06.2021</div>
<div class="t" style="left:93.5px;top:823.57px;font-size:12px;color:#1A1A1A;font-weight:400;word-spacing:1.2px">RE 2021-00020</div>
<svg class="a" style="left:189px;top:818.34px" width="22" height="21"><use href="#pencil"/></svg>
<div class="t" style="left:218.4px;top:824.57px;font-size:12px;color:#1A1A1A;font-weight:400;word-spacing:1.5px">Musterfirma GmbH</div>
<div class="t" style="right:1354.5px;top:824.57px;font-size:12px;color:#1A1A1A;font-weight:400;word-spacing:1.2px">&euro; 4 884,00</div>
<div class="t" style="right:1265px;top:824.57px;font-size:12px;color:#1A1A1A;font-weight:400;word-spacing:1.2px">&euro; 5 860,80</div>
<div class="t" style="right:1103.4px;top:824.57px;font-size:12px;color:#1A1A1A;font-weight:400;word-spacing:1.2px">&euro; 5 860,80</div>
<div class="t" style="right:914.8px;top:824.57px;font-size:12px;color:#1A1A1A;font-weight:400;word-spacing:1.2px">&euro; 5 860,80</div>
<div class="t" style="left:1066.7px;top:824.57px;font-size:12px;color:#1A1A1A;font-weight:400;letter-spacing:0.13px">03.07.2021</div>
<div class="b" style="left:1351px;top:816.84px;width:78px"></div>
<svg class="a" style="left:1359.6px;top:823.44px" width="16" height="16"><use href="#i_dl"/></svg>
<div class="t" style="left:1376.4px;top:823.37px;font-size:12px;color:#454545;font-weight:400;">Zahlung</div>
<div class="b" style="left:1431px;top:816.84px;width:59px"></div>
<svg class="a" style="left:1437.7px;top:823.14px" width="16" height="16"><use href="#i_pen"/></svg>
<div class="t" style="left:1455.3px;top:823.37px;font-size:12px;color:#454545;font-weight:400;">Notiz</div>
<div class="b" style="left:1575px;top:816.84px;width:78px"></div>
<svg class="a" style="left:1585.7px;top:822.44px" width="16" height="16"><use href="#i_doc"/></svg>
<div class="t" style="left:1603px;top:823.37px;font-size:12px;color:#454545;font-weight:400;">Ansicht</div>
<div class="b" style="left:1654px;top:816.84px;width:82px"></div>
<svg class="a" style="left:1661.5px;top:822.04px" width="16" height="16"><use href="#i_prn"/></svg>
<div class="t" style="left:1682px;top:823.37px;font-size:12px;color:#454545;font-weight:400;">Drucken</div>
<div class="b" style="left:1738px;top:816.84px;width:69px"></div>
<svg class="a" style="left:1746px;top:824.44px" width="16" height="16"><use href="#i_env"/></svg>
<div class="t" style="left:1764.7px;top:823.37px;font-size:12px;color:#454545;font-weight:400;">E-Mail</div>
<div class="b" style="left:1809px;top:816.84px;width:30px"></div>
<svg class="a" style="left:1817px;top:822.44px" width="16" height="16"><use href="#i_up"/></svg>
<div class="b" style="left:1841px;top:816.84px;width:30px"></div>
<svg class="a" style="left:1849px;top:822.44px" width="16" height="16"><use href="#i_dup"/></svg>
<div class="b" style="left:1873px;top:816.84px;width:30px"></div>
<svg class="a" style="left:1880.3px;top:822.04px" width="16" height="16"><use href="#i_x"/></svg>
<div class="b" style="left:1905px;top:816.84px;width:30px"></div>
<svg class="a" style="left:1912.3px;top:822.04px" width="16" height="16"><use href="#i_info"/></svg>
<div class="t" style="left:19.7px;top:850.65px;font-size:12px;color:#1A1A1A;font-weight:400;letter-spacing:0.05px">19.06.2021</div>
<div class="t" style="left:93.5px;top:849.65px;font-size:12px;color:#1A1A1A;font-weight:400;word-spacing:1.2px">RE 2021-00021</div>
<svg class="a" style="left:189px;top:844.42px" width="22" height="21"><use href="#pencil"/></svg>
<div class="t" style="left:218.4px;top:850.65px;font-size:12px;color:#1A1A1A;font-weight:400;word-spacing:1.5px">Musterfirma GmbH</div>
<div class="t" style="right:1354.5px;top:850.65px;font-size:12px;color:#1A1A1A;font-weight:400;word-spacing:1.2px">&euro; 3 300,00</div>
<div class="t" style="right:1265px;top:850.65px;font-size:12px;color:#1A1A1A;font-weight:400;word-spacing:1.2px">&euro; 3 960,00</div>
<div class="t" style="right:1103.4px;top:850.65px;font-size:12px;color:#1A1A1A;font-weight:400;word-spacing:1.2px">&euro; 3 960,00</div>
<div class="t" style="right:914.8px;top:850.65px;font-size:12px;color:#1A1A1A;font-weight:400;word-spacing:1.2px">&euro; 3 960,00</div>
<div class="t" style="left:1066.7px;top:850.65px;font-size:12px;color:#1A1A1A;font-weight:400;letter-spacing:0.13px">03.07.2021</div>
<div class="b" style="left:1351px;top:842.92px;width:78px"></div>
<svg class="a" style="left:1359.6px;top:849.52px" width="16" height="16"><use href="#i_dl"/></svg>
<div class="t" style="left:1376.4px;top:849.45px;font-size:12px;color:#454545;font-weight:400;">Zahlung</div>
<div class="b" style="left:1431px;top:842.92px;width:59px"></div>
<svg class="a" style="left:1437.7px;top:849.22px" width="16" height="16"><use href="#i_pen"/></svg>
<div class="t" style="left:1455.3px;top:849.45px;font-size:12px;color:#454545;font-weight:400;">Notiz</div>
<div class="b" style="left:1575px;top:842.92px;width:78px"></div>
<svg class="a" style="left:1585.7px;top:848.52px" width="16" height="16"><use href="#i_doc"/></svg>
<div class="t" style="left:1603px;top:849.45px;font-size:12px;color:#454545;font-weight:400;">Ansicht</div>
<div class="b" style="left:1654px;top:842.92px;width:82px"></div>
<svg class="a" style="left:1661.5px;top:848.12px" width="16" height="16"><use href="#i_prn"/></svg>
<div class="t" style="left:1682px;top:849.45px;font-size:12px;color:#454545;font-weight:400;">Drucken</div>
<div class="b" style="left:1738px;top:842.92px;width:69px"></div>
<svg class="a" style="left:1746px;top:850.52px" width="16" height="16"><use href="#i_env"/></svg>
<div class="t" style="left:1764.7px;top:849.45px;font-size:12px;color:#454545;font-weight:400;">E-Mail</div>
<div class="b" style="left:1809px;top:842.92px;width:30px"></div>
<svg class="a" style="left:1817px;top:848.52px" width="16" height="16"><use href="#i_up"/></svg>
<div class="b" style="left:1841px;top:842.92px;width:30px"></div>
<svg class="a" style="left:1849px;top:848.52px" width="16" height="16"><use href="#i_dup"/></svg>
<div class="b" style="left:1873px;top:842.92px;width:30px"></div>
<svg class="a" style="left:1880.3px;top:848.12px" width="16" height="16"><use href="#i_x"/></svg>
<div class="b" style="left:1905px;top:842.92px;width:30px"></div>
<svg class="a" style="left:1912.3px;top:848.12px" width="16" height="16"><use href="#i_info"/></svg>
<div class="t" style="left:19.7px;top:876.73px;font-size:12px;color:#1A1A1A;font-weight:400;letter-spacing:0.05px">19.06.2021</div>
<div class="t" style="left:93.5px;top:875.73px;font-size:12px;color:#1A1A1A;font-weight:400;word-spacing:1.2px">RE 2021-00022</div>
<svg class="a" style="left:189px;top:870.50px" width="22" height="21"><use href="#pencil"/></svg>
<div class="t" style="left:218.4px;top:876.73px;font-size:12px;color:#1A1A1A;font-weight:400;word-spacing:1.5px">Musterfirma GmbH</div>
<div class="t" style="right:1354.5px;top:876.73px;font-size:12px;color:#1A1A1A;font-weight:400;word-spacing:1.2px">&euro; 2 442,00</div>
<div class="t" style="right:1265px;top:876.73px;font-size:12px;color:#1A1A1A;font-weight:400;word-spacing:1.2px">&euro; 2 930,40</div>
<div class="t" style="right:1103.4px;top:876.73px;font-size:12px;color:#1A1A1A;font-weight:400;word-spacing:1.2px">&euro; 2 930,40</div>
<div class="t" style="right:914.8px;top:876.73px;font-size:12px;color:#1A1A1A;font-weight:400;word-spacing:1.2px">&euro; 2 930,40</div>
<div class="t" style="left:1066.7px;top:876.73px;font-size:12px;color:#1A1A1A;font-weight:400;letter-spacing:0.13px">03.07.2021</div>
<div class="b" style="left:1351px;top:869.00px;width:78px"></div>
<svg class="a" style="left:1359.6px;top:875.60px" width="16" height="16"><use href="#i_dl"/></svg>
<div class="t" style="left:1376.4px;top:875.53px;font-size:12px;color:#454545;font-weight:400;">Zahlung</div>
<div class="b" style="left:1431px;top:869.00px;width:59px"></div>
<svg class="a" style="left:1437.7px;top:875.30px" width="16" height="16"><use href="#i_pen"/></svg>
<div class="t" style="left:1455.3px;top:875.53px;font-size:12px;color:#454545;font-weight:400;">Notiz</div>
<div class="b" style="left:1575px;top:869.00px;width:78px"></div>
<svg class="a" style="left:1585.7px;top:874.60px" width="16" height="16"><use href="#i_doc"/></svg>
<div class="t" style="left:1603px;top:875.53px;font-size:12px;color:#454545;font-weight:400;">Ansicht</div>
<div class="b" style="left:1654px;top:869.00px;width:82px"></div>
<svg class="a" style="left:1661.5px;top:874.20px" width="16" height="16"><use href="#i_prn"/></svg>
<div class="t" style="left:1682px;top:875.53px;font-size:12px;color:#454545;font-weight:400;">Drucken</div>
<div class="b" style="left:1738px;top:869.00px;width:69px"></div>
<svg class="a" style="left:1746px;top:876.60px" width="16" height="16"><use href="#i_env"/></svg>
<div class="t" style="left:1764.7px;top:875.53px;font-size:12px;color:#454545;font-weight:400;">E-Mail</div>
<div class="b" style="left:1809px;top:869.00px;width:30px"></div>
<svg class="a" style="left:1817px;top:874.60px" width="16" height="16"><use href="#i_up"/></svg>
<div class="b" style="left:1841px;top:869.00px;width:30px"></div>
<svg class="a" style="left:1849px;top:874.60px" width="16" height="16"><use href="#i_dup"/></svg>
<div class="b" style="left:1873px;top:869.00px;width:30px"></div>
<svg class="a" style="left:1880.3px;top:874.20px" width="16" height="16"><use href="#i_x"/></svg>
<div class="b" style="left:1905px;top:869.00px;width:30px"></div>
<svg class="a" style="left:1912.3px;top:874.20px" width="16" height="16"><use href="#i_info"/></svg>
<div class="t" style="left:19.7px;top:902.81px;font-size:12px;color:#1A1A1A;font-weight:400;letter-spacing:0.05px">19.06.2021</div>
<div class="t" style="left:93.5px;top:901.81px;font-size:12px;color:#1A1A1A;font-weight:400;word-spacing:1.2px">RE 2021-00023</div>
<svg class="a" style="left:189px;top:896.58px" width="22" height="21"><use href="#pencil"/></svg>
<div class="t" style="left:218.4px;top:902.81px;font-size:12px;color:#1A1A1A;font-weight:400;word-spacing:1.5px">Musterfirma GmbH</div>
<div class="t" style="right:1354.5px;top:902.81px;font-size:12px;color:#1A1A1A;font-weight:400;word-spacing:1.2px">&euro; 3 410,00</div>
<div class="t" style="right:1265px;top:902.81px;font-size:12px;color:#1A1A1A;font-weight:400;word-spacing:1.2px">&euro; 4 092,00</div>
<div class="t" style="right:1103.4px;top:902.81px;font-size:12px;color:#1A1A1A;font-weight:400;word-spacing:1.2px">&euro; 4 092,00</div>
<div class="t" style="right:914.8px;top:902.81px;font-size:12px;color:#1A1A1A;font-weight:400;word-spacing:1.2px">&euro; 4 092,00</div>
<div class="t" style="left:1066.7px;top:902.81px;font-size:12px;color:#1A1A1A;font-weight:400;letter-spacing:0.13px">03.07.2021</div>
<div class="b" style="left:1351px;top:895.08px;width:78px"></div>
<svg class="a" style="left:1359.6px;top:901.68px" width="16" height="16"><use href="#i_dl"/></svg>
<div class="t" style="left:1376.4px;top:901.61px;font-size:12px;color:#454545;font-weight:400;">Zahlung</div>
<div class="b" style="left:1431px;top:895.08px;width:59px"></div>
<svg class="a" style="left:1437.7px;top:901.38px" width="16" height="16"><use href="#i_pen"/></svg>
<div class="t" style="left:1455.3px;top:901.61px;font-size:12px;color:#454545;font-weight:400;">Notiz</div>
<div class="b" style="left:1575px;top:895.08px;width:78px"></div>
<svg class="a" style="left:1585.7px;top:900.68px" width="16" height="16"><use href="#i_doc"/></svg>
<div class="t" style="left:1603px;top:901.61px;font-size:12px;color:#454545;font-weight:400;">Ansicht</div>
<div class="b" style="left:1654px;top:895.08px;width:82px"></div>
<svg class="a" style="left:1661.5px;top:900.28px" width="16" height="16"><use href="#i_prn"/></svg>
<div class="t" style="left:1682px;top:901.61px;font-size:12px;color:#454545;font-weight:400;">Drucken</div>
<div class="b" style="left:1738px;top:895.08px;width:69px"></div>
<svg class="a" style="left:1746px;top:902.68px" width="16" height="16"><use href="#i_env"/></svg>
<div class="t" style="left:1764.7px;top:901.61px;font-size:12px;color:#454545;font-weight:400;">E-Mail</div>
<div class="b" style="left:1809px;top:895.08px;width:30px"></div>
<svg class="a" style="left:1817px;top:900.68px" width="16" height="16"><use href="#i_up"/></svg>
<div class="b" style="left:1841px;top:895.08px;width:30px"></div>
<svg class="a" style="left:1849px;top:900.68px" width="16" height="16"><use href="#i_dup"/></svg>
<div class="b" style="left:1873px;top:895.08px;width:30px"></div>
<svg class="a" style="left:1880.3px;top:900.28px" width="16" height="16"><use href="#i_x"/></svg>
<div class="b" style="left:1905px;top:895.08px;width:30px"></div>
<svg class="a" style="left:1912.3px;top:900.28px" width="16" height="16"><use href="#i_info"/></svg>
<div class="t" style="left:19.7px;top:928.89px;font-size:12px;color:#1A1A1A;font-weight:400;letter-spacing:0.05px">19.06.2021</div>
<div class="t" style="left:93.5px;top:927.89px;font-size:12px;color:#1A1A1A;font-weight:400;word-spacing:1.2px">RE 2021-00024</div>
<svg class="a" style="left:189px;top:922.66px" width="22" height="21"><use href="#pencil"/></svg>
<div class="t" style="left:218.4px;top:928.89px;font-size:12px;color:#1A1A1A;font-weight:400;word-spacing:1.5px">Musterfirma GmbH</div>
<div class="t" style="right:1354.5px;top:928.89px;font-size:12px;color:#1A1A1A;font-weight:400;word-spacing:1.2px">&euro; 6 600,00</div>
<div class="t" style="right:1265px;top:928.89px;font-size:12px;color:#1A1A1A;font-weight:400;word-spacing:1.2px">&euro; 7 920,00</div>
<div class="t" style="right:1103.4px;top:928.89px;font-size:12px;color:#1A1A1A;font-weight:400;word-spacing:1.2px">&euro; 7 920,00</div>
<div class="t" style="right:914.8px;top:928.89px;font-size:12px;color:#1A1A1A;font-weight:400;word-spacing:1.2px">&euro; 7 920,00</div>
<div class="t" style="left:1066.7px;top:928.89px;font-size:12px;color:#1A1A1A;font-weight:400;letter-spacing:0.13px">03.07.2021</div>
<div class="b" style="left:1351px;top:921.16px;width:78px"></div>
<svg class="a" style="left:1359.6px;top:927.76px" width="16" height="16"><use href="#i_dl"/></svg>
<div class="t" style="left:1376.4px;top:927.69px;font-size:12px;color:#454545;font-weight:400;">Zahlung</div>
<div class="b" style="left:1431px;top:921.16px;width:59px"></div>
<svg class="a" style="left:1437.7px;top:927.46px" width="16" height="16"><use href="#i_pen"/></svg>
<div class="t" style="left:1455.3px;top:927.69px;font-size:12px;color:#454545;font-weight:400;">Notiz</div>
<div class="b" style="left:1575px;top:921.16px;width:78px"></div>
<svg class="a" style="left:1585.7px;top:926.76px" width="16" height="16"><use href="#i_doc"/></svg>
<div class="t" style="left:1603px;top:927.69px;font-size:12px;color:#454545;font-weight:400;">Ansicht</div>
<div class="b" style="left:1654px;top:921.16px;width:82px"></div>
<svg class="a" style="left:1661.5px;top:926.36px" width="16" height="16"><use href="#i_prn"/></svg>
<div class="t" style="left:1682px;top:927.69px;font-size:12px;color:#454545;font-weight:400;">Drucken</div>
<div class="b" style="left:1738px;top:921.16px;width:69px"></div>
<svg class="a" style="left:1746px;top:928.76px" width="16" height="16"><use href="#i_env"/></svg>
<div class="t" style="left:1764.7px;top:927.69px;font-size:12px;color:#454545;font-weight:400;">E-Mail</div>
<div class="b" style="left:1809px;top:921.16px;width:30px"></div>
<svg class="a" style="left:1817px;top:926.76px" width="16" height="16"><use href="#i_up"/></svg>
<div class="b" style="left:1841px;top:921.16px;width:30px"></div>
<svg class="a" style="left:1849px;top:926.76px" width="16" height="16"><use href="#i_dup"/></svg>
<div class="b" style="left:1873px;top:921.16px;width:30px"></div>
<svg class="a" style="left:1880.3px;top:926.36px" width="16" height="16"><use href="#i_x"/></svg>
<div class="b" style="left:1905px;top:921.16px;width:30px"></div>
<svg class="a" style="left:1912.3px;top:926.36px" width="16" height="16"><use href="#i_info"/></svg>
<div class="t" style="left:19.7px;top:954.97px;font-size:12px;color:#1A1A1A;font-weight:400;letter-spacing:0.05px">19.06.2021</div>
<div class="t" style="left:93.5px;top:953.97px;font-size:12px;color:#1A1A1A;font-weight:400;word-spacing:1.2px">RE 2021-00025</div>
<svg class="a" style="left:189px;top:948.74px" width="22" height="21"><use href="#pencil"/></svg>
<div class="t" style="left:218.4px;top:954.97px;font-size:12px;color:#1A1A1A;font-weight:400;word-spacing:1.5px">Musterfirma GmbH</div>
<div class="t" style="right:1354.5px;top:954.97px;font-size:12px;color:#1A1A1A;font-weight:400;word-spacing:1.2px">&euro; 11 000,00</div>
<div class="t" style="right:1265px;top:954.97px;font-size:12px;color:#1A1A1A;font-weight:400;word-spacing:1.2px">&euro; 13 200,00</div>
<div class="t" style="right:1103.4px;top:954.97px;font-size:12px;color:#1A1A1A;font-weight:400;word-spacing:1.2px">&euro; 13 200,00</div>
<div class="t" style="right:914.8px;top:954.97px;font-size:12px;color:#1A1A1A;font-weight:400;word-spacing:1.2px">&euro; 13 200,00</div>
<div class="t" style="left:1066.7px;top:954.97px;font-size:12px;color:#1A1A1A;font-weight:400;letter-spacing:0.13px">03.07.2021</div>
<div class="b" style="left:1351px;top:947.24px;width:78px"></div>
<svg class="a" style="left:1359.6px;top:953.84px" width="16" height="16"><use href="#i_dl"/></svg>
<div class="t" style="left:1376.4px;top:953.77px;font-size:12px;color:#454545;font-weight:400;">Zahlung</div>
<div class="b" style="left:1431px;top:947.24px;width:59px"></div>
<svg class="a" style="left:1437.7px;top:953.54px" width="16" height="16"><use href="#i_pen"/></svg>
<div class="t" style="left:1455.3px;top:953.77px;font-size:12px;color:#454545;font-weight:400;">Notiz</div>
<div class="b" style="left:1575px;top:947.24px;width:78px"></div>
<svg class="a" style="left:1585.7px;top:952.84px" width="16" height="16"><use href="#i_doc"/></svg>
<div class="t" style="left:1603px;top:953.77px;font-size:12px;color:#454545;font-weight:400;">Ansicht</div>
<div class="b" style="left:1654px;top:947.24px;width:82px"></div>
<svg class="a" style="left:1661.5px;top:952.44px" width="16" height="16"><use href="#i_prn"/></svg>
<div class="t" style="left:1682px;top:953.77px;font-size:12px;color:#454545;font-weight:400;">Drucken</div>
<div class="b" style="left:1738px;top:947.24px;width:69px"></div>
<svg class="a" style="left:1746px;top:954.84px" width="16" height="16"><use href="#i_env"/></svg>
<div class="t" style="left:1764.7px;top:953.77px;font-size:12px;color:#454545;font-weight:400;">E-Mail</div>
<div class="b" style="left:1809px;top:947.24px;width:30px"></div>
<svg class="a" style="left:1817px;top:952.84px" width="16" height="16"><use href="#i_up"/></svg>
<div class="b" style="left:1841px;top:947.24px;width:30px"></div>
<svg class="a" style="left:1849px;top:952.84px" width="16" height="16"><use href="#i_dup"/></svg>
<div class="b" style="left:1873px;top:947.24px;width:30px"></div>
<svg class="a" style="left:1880.3px;top:952.44px" width="16" height="16"><use href="#i_x"/></svg>
<div class="b" style="left:1905px;top:947.24px;width:30px"></div>
<svg class="a" style="left:1912.3px;top:952.44px" width="16" height="16"><use href="#i_info"/></svg>
<div class="t" style="left:19.7px;top:981.05px;font-size:12px;color:#1A1A1A;font-weight:400;letter-spacing:0.05px">19.06.2021</div>
<div class="t" style="left:93.5px;top:980.05px;font-size:12px;color:#1A1A1A;font-weight:400;word-spacing:1.2px">RE 2021-00026</div>
<svg class="a" style="left:189px;top:974.82px" width="22" height="21"><use href="#pencil"/></svg>
<div class="t" style="left:218.4px;top:981.05px;font-size:12px;color:#1A1A1A;font-weight:400;word-spacing:1.5px">Paulitsch Gmbh</div>
<div class="t" style="right:1354.5px;top:981.05px;font-size:12px;color:#1A1A1A;font-weight:400;word-spacing:1.2px">&euro; 3 410,00</div>
<div class="t" style="right:1265px;top:981.05px;font-size:12px;color:#1A1A1A;font-weight:400;word-spacing:1.2px">&euro; 3 410,00</div>
<div class="t" style="right:1190px;top:981.05px;font-size:12px;color:#1A1A1A;font-weight:400;word-spacing:1.2px">&euro; 102,30</div>
<div class="t" style="right:1103.4px;top:981.05px;font-size:12px;color:#1A1A1A;font-weight:400;word-spacing:1.2px">&euro; 3 307,70</div>
<div class="t" style="right:914.8px;top:981.05px;font-size:12px;color:#1A1A1A;font-weight:400;word-spacing:1.2px">&euro; 3 307,70</div>
<div class="t" style="left:1066.7px;top:981.05px;font-size:12px;color:#1A1A1A;font-weight:400;letter-spacing:0.13px">03.07.2021</div>
<div class="t" style="left:1150.4px;top:981.05px;font-size:12px;color:#1A1A1A;font-weight:400;letter-spacing:0.13px">02.07.2021</div>
<div class="t" style="right:626.5999999999999px;top:981.05px;font-size:12px;color:#1A1A1A;font-weight:400;word-spacing:1.2px">&euro; 3 307,70</div>
<div class="b" style="left:1351px;top:973.32px;width:78px"></div>
<svg class="a" style="left:1359.6px;top:979.92px" width="16" height="16"><use href="#i_dl"/></svg>
<div class="t" style="left:1376.4px;top:979.85px;font-size:12px;color:#454545;font-weight:400;">Zahlung</div>
<div class="b" style="left:1431px;top:973.32px;width:59px"></div>
<svg class="a" style="left:1437.7px;top:979.62px" width="16" height="16"><use href="#i_pen"/></svg>
<div class="t" style="left:1455.3px;top:979.85px;font-size:12px;color:#454545;font-weight:400;">Notiz</div>
<div class="b" style="left:1575px;top:973.32px;width:78px"></div>
<svg class="a" style="left:1585.7px;top:978.92px" width="16" height="16"><use href="#i_doc"/></svg>
<div class="t" style="left:1603px;top:979.85px;font-size:12px;color:#454545;font-weight:400;">Ansicht</div>
<div class="b" style="left:1654px;top:973.32px;width:82px"></div>
<svg class="a" style="left:1661.5px;top:978.52px" width="16" height="16"><use href="#i_prn"/></svg>
<div class="t" style="left:1682px;top:979.85px;font-size:12px;color:#454545;font-weight:400;">Drucken</div>
<div class="b" style="left:1738px;top:973.32px;width:69px"></div>
<svg class="a" style="left:1746px;top:980.92px" width="16" height="16"><use href="#i_env"/></svg>
<div class="t" style="left:1764.7px;top:979.85px;font-size:12px;color:#454545;font-weight:400;">E-Mail</div>
<div class="b" style="left:1809px;top:973.32px;width:30px"></div>
<svg class="a" style="left:1817px;top:978.92px" width="16" height="16"><use href="#i_up"/></svg>
<div class="b" style="left:1841px;top:973.32px;width:30px"></div>
<svg class="a" style="left:1849px;top:978.92px" width="16" height="16"><use href="#i_dup"/></svg>
<div class="b" style="left:1873px;top:973.32px;width:30px"></div>
<svg class="a" style="left:1880.3px;top:978.52px" width="16" height="16"><use href="#i_x"/></svg>
<div class="b" style="left:1905px;top:973.32px;width:30px"></div>
<svg class="a" style="left:1912.3px;top:978.52px" width="16" height="16"><use href="#i_info"/></svg>
<div class="t" style="left:19.7px;top:1007.13px;font-size:12px;color:#1A1A1A;font-weight:400;letter-spacing:0.05px">19.06.2021</div>
<div class="t" style="left:93.5px;top:1006.13px;font-size:12px;color:#1A1A1A;font-weight:400;word-spacing:1.2px">RE 2021-00027</div>
<svg class="a" style="left:189px;top:1000.90px" width="22" height="21"><use href="#pencil"/></svg>
<div class="t" style="left:218.4px;top:1007.13px;font-size:12px;color:#1A1A1A;font-weight:400;word-spacing:1.5px">ATRS GmbH</div>
<div class="t" style="right:1354.5px;top:1007.13px;font-size:12px;color:#1A1A1A;font-weight:400;word-spacing:1.2px">&euro; 9 869,00</div>
<div class="t" style="right:1265px;top:1007.13px;font-size:12px;color:#1A1A1A;font-weight:400;word-spacing:1.2px">&euro; 11 842,80</div>
<div class="t" style="right:1103.4px;top:1007.13px;font-size:12px;color:#1A1A1A;font-weight:400;word-spacing:1.2px">&euro; 11 842,80</div>
<div class="t" style="right:914.8px;top:1007.13px;font-size:12px;color:#1A1A1A;font-weight:400;word-spacing:1.2px">&euro; 11 842,80</div>
<div class="t" style="left:1066.7px;top:1007.13px;font-size:12px;color:#1A1A1A;font-weight:400;letter-spacing:0.13px">03.07.2021</div>
<div class="b" style="left:1351px;top:999.40px;width:78px"></div>
<svg class="a" style="left:1359.6px;top:1006.00px" width="16" height="16"><use href="#i_dl"/></svg>
<div class="t" style="left:1376.4px;top:1005.93px;font-size:12px;color:#454545;font-weight:400;">Zahlung</div>
<div class="b" style="left:1431px;top:999.40px;width:59px"></div>
<svg class="a" style="left:1437.7px;top:1005.70px" width="16" height="16"><use href="#i_pen"/></svg>
<div class="t" style="left:1455.3px;top:1005.93px;font-size:12px;color:#454545;font-weight:400;">Notiz</div>
<div class="b" style="left:1575px;top:999.40px;width:78px"></div>
<svg class="a" style="left:1585.7px;top:1005.00px" width="16" height="16"><use href="#i_doc"/></svg>
<div class="t" style="left:1603px;top:1005.93px;font-size:12px;color:#454545;font-weight:400;">Ansicht</div>
<div class="b" style="left:1654px;top:999.40px;width:82px"></div>
<svg class="a" style="left:1661.5px;top:1004.60px" width="16" height="16"><use href="#i_prn"/></svg>
<div class="t" style="left:1682px;top:1005.93px;font-size:12px;color:#454545;font-weight:400;">Drucken</div>
<div class="b" style="left:1738px;top:999.40px;width:69px"></div>
<svg class="a" style="left:1746px;top:1007.00px" width="16" height="16"><use href="#i_env"/></svg>
<div class="t" style="left:1764.7px;top:1005.93px;font-size:12px;color:#454545;font-weight:400;">E-Mail</div>
<div class="b" style="left:1809px;top:999.40px;width:30px"></div>
<svg class="a" style="left:1817px;top:1005.00px" width="16" height="16"><use href="#i_up"/></svg>
<div class="b" style="left:1841px;top:999.40px;width:30px"></div>
<svg class="a" style="left:1849px;top:1005.00px" width="16" height="16"><use href="#i_dup"/></svg>
<div class="b" style="left:1873px;top:999.40px;width:30px"></div>
<svg class="a" style="left:1880.3px;top:1004.60px" width="16" height="16"><use href="#i_x"/></svg>
<div class="b" style="left:1905px;top:999.40px;width:30px"></div>
<svg class="a" style="left:1912.3px;top:1004.60px" width="16" height="16"><use href="#i_info"/></svg>
<div class="a" style="left:1px;top:1024.08px;width:1935px;height:26px;background:#D5F1D5"></div>
<div class="t" style="left:19.7px;top:1033.21px;font-size:12px;color:#1A1A1A;font-weight:400;letter-spacing:0.05px">19.06.2021</div>
<div class="t" style="left:93.5px;top:1032.21px;font-size:12px;color:#1A1A1A;font-weight:400;word-spacing:1.2px">RE 2021-00028</div>
<svg class="a" style="left:189px;top:1026.98px" width="22" height="21"><use href="#pencil"/></svg>
<div class="t" style="left:218.4px;top:1033.21px;font-size:12px;color:#1A1A1A;font-weight:400;word-spacing:1.5px">ATRS GmbH</div>
<div class="t" style="right:1354.5px;top:1033.21px;font-size:12px;color:#1A1A1A;font-weight:400;word-spacing:1.2px">&euro; 5 772,00</div>
<div class="t" style="right:1265px;top:1033.21px;font-size:12px;color:#1A1A1A;font-weight:400;word-spacing:1.2px">&euro; 6 926,40</div>
<div class="t" style="right:1103.4px;top:1033.21px;font-size:12px;color:#1A1A1A;font-weight:400;word-spacing:1.2px">&euro; 6 926,40</div>
<div class="t" style="right:914.8px;top:1033.21px;font-size:12px;color:#1A1A1A;font-weight:400;word-spacing:1.2px">&euro; 6 926,40</div>
<div class="t" style="left:1066.7px;top:1033.21px;font-size:12px;color:#1A1A1A;font-weight:400;letter-spacing:0.13px">03.07.2021</div>
<div class="b b2" style="left:1351px;top:1026.48px;width:78px"></div>
<svg class="a" style="left:1359.6px;top:1032.08px" width="16" height="16"><use href="#i_dl"/></svg>
<div class="t" style="left:1376.4px;top:1032.01px;font-size:12px;color:#454545;font-weight:400;">Zahlung</div>
<div class="b b2" style="left:1431px;top:1026.48px;width:59px"></div>
<svg class="a" style="left:1437.7px;top:1031.78px" width="16" height="16"><use href="#i_pen"/></svg>
<div class="t" style="left:1455.3px;top:1032.01px;font-size:12px;color:#454545;font-weight:400;">Notiz</div>
<div class="b b2" style="left:1575px;top:1026.48px;width:78px"></div>
<svg class="a" style="left:1585.7px;top:1031.08px" width="16" height="16"><use href="#i_doc"/></svg>
<div class="t" style="left:1603px;top:1032.01px;font-size:12px;color:#454545;font-weight:400;">Ansicht</div>
<div class="b b2" style="left:1654px;top:1026.48px;width:82px"></div>
<svg class="a" style="left:1661.5px;top:1030.68px" width="16" height="16"><use href="#i_prn"/></svg>
<div class="t" style="left:1682px;top:1032.01px;font-size:12px;color:#454545;font-weight:400;">Drucken</div>
<div class="b b2" style="left:1738px;top:1026.48px;width:69px"></div>
<svg class="a" style="left:1746px;top:1033.08px" width="16" height="16"><use href="#i_env"/></svg>
<div class="t" style="left:1764.7px;top:1032.01px;font-size:12px;color:#454545;font-weight:400;">E-Mail</div>
<div class="b b2" style="left:1809px;top:1026.48px;width:30px"></div>
<svg class="a" style="left:1817px;top:1031.08px" width="16" height="16"><use href="#i_up"/></svg>
<div class="b b2" style="left:1841px;top:1026.48px;width:30px"></div>
<svg class="a" style="left:1849px;top:1031.08px" width="16" height="16"><use href="#i_dup"/></svg>
<div class="b b2" style="left:1873px;top:1026.48px;width:30px"></div>
<svg class="a" style="left:1880.3px;top:1030.68px" width="16" height="16"><use href="#i_x"/></svg>
<div class="b b2" style="left:1905px;top:1026.48px;width:30px"></div>
<svg class="a" style="left:1912.3px;top:1030.68px" width="16" height="16"><use href="#i_info"/></svg>
<div class="a" style="left:1px;top:219px;width:1px;height:908px;background:#FFFFFF"></div>
<div class="t" style="left:446px;top:1063.82px;font-size:14.3px;color:#111;font-weight:700;">Summen</div>
<div class="t" style="right:1354.8px;top:1066.03px;font-size:12px;color:#111;font-weight:700;word-spacing:1.2px">&euro; 209 402,00</div>
<div class="t" style="right:1265.5px;top:1066.03px;font-size:12px;color:#111;font-weight:700;word-spacing:1.2px">&euro; 236 605,40</div>
<div class="t" style="right:1190px;top:1066.03px;font-size:12px;color:#111;font-weight:700;word-spacing:1.2px">&euro; 2 571,94</div>
<div class="t" style="right:1103.7px;top:1066.03px;font-size:12px;color:#111;font-weight:700;word-spacing:1.2px">&euro; 234 033,46</div>
<div class="t" style="right:914.8px;top:1066.03px;font-size:12px;color:#111;font-weight:700;word-spacing:1.2px">&euro; 234 033,46</div>
</body></html>
